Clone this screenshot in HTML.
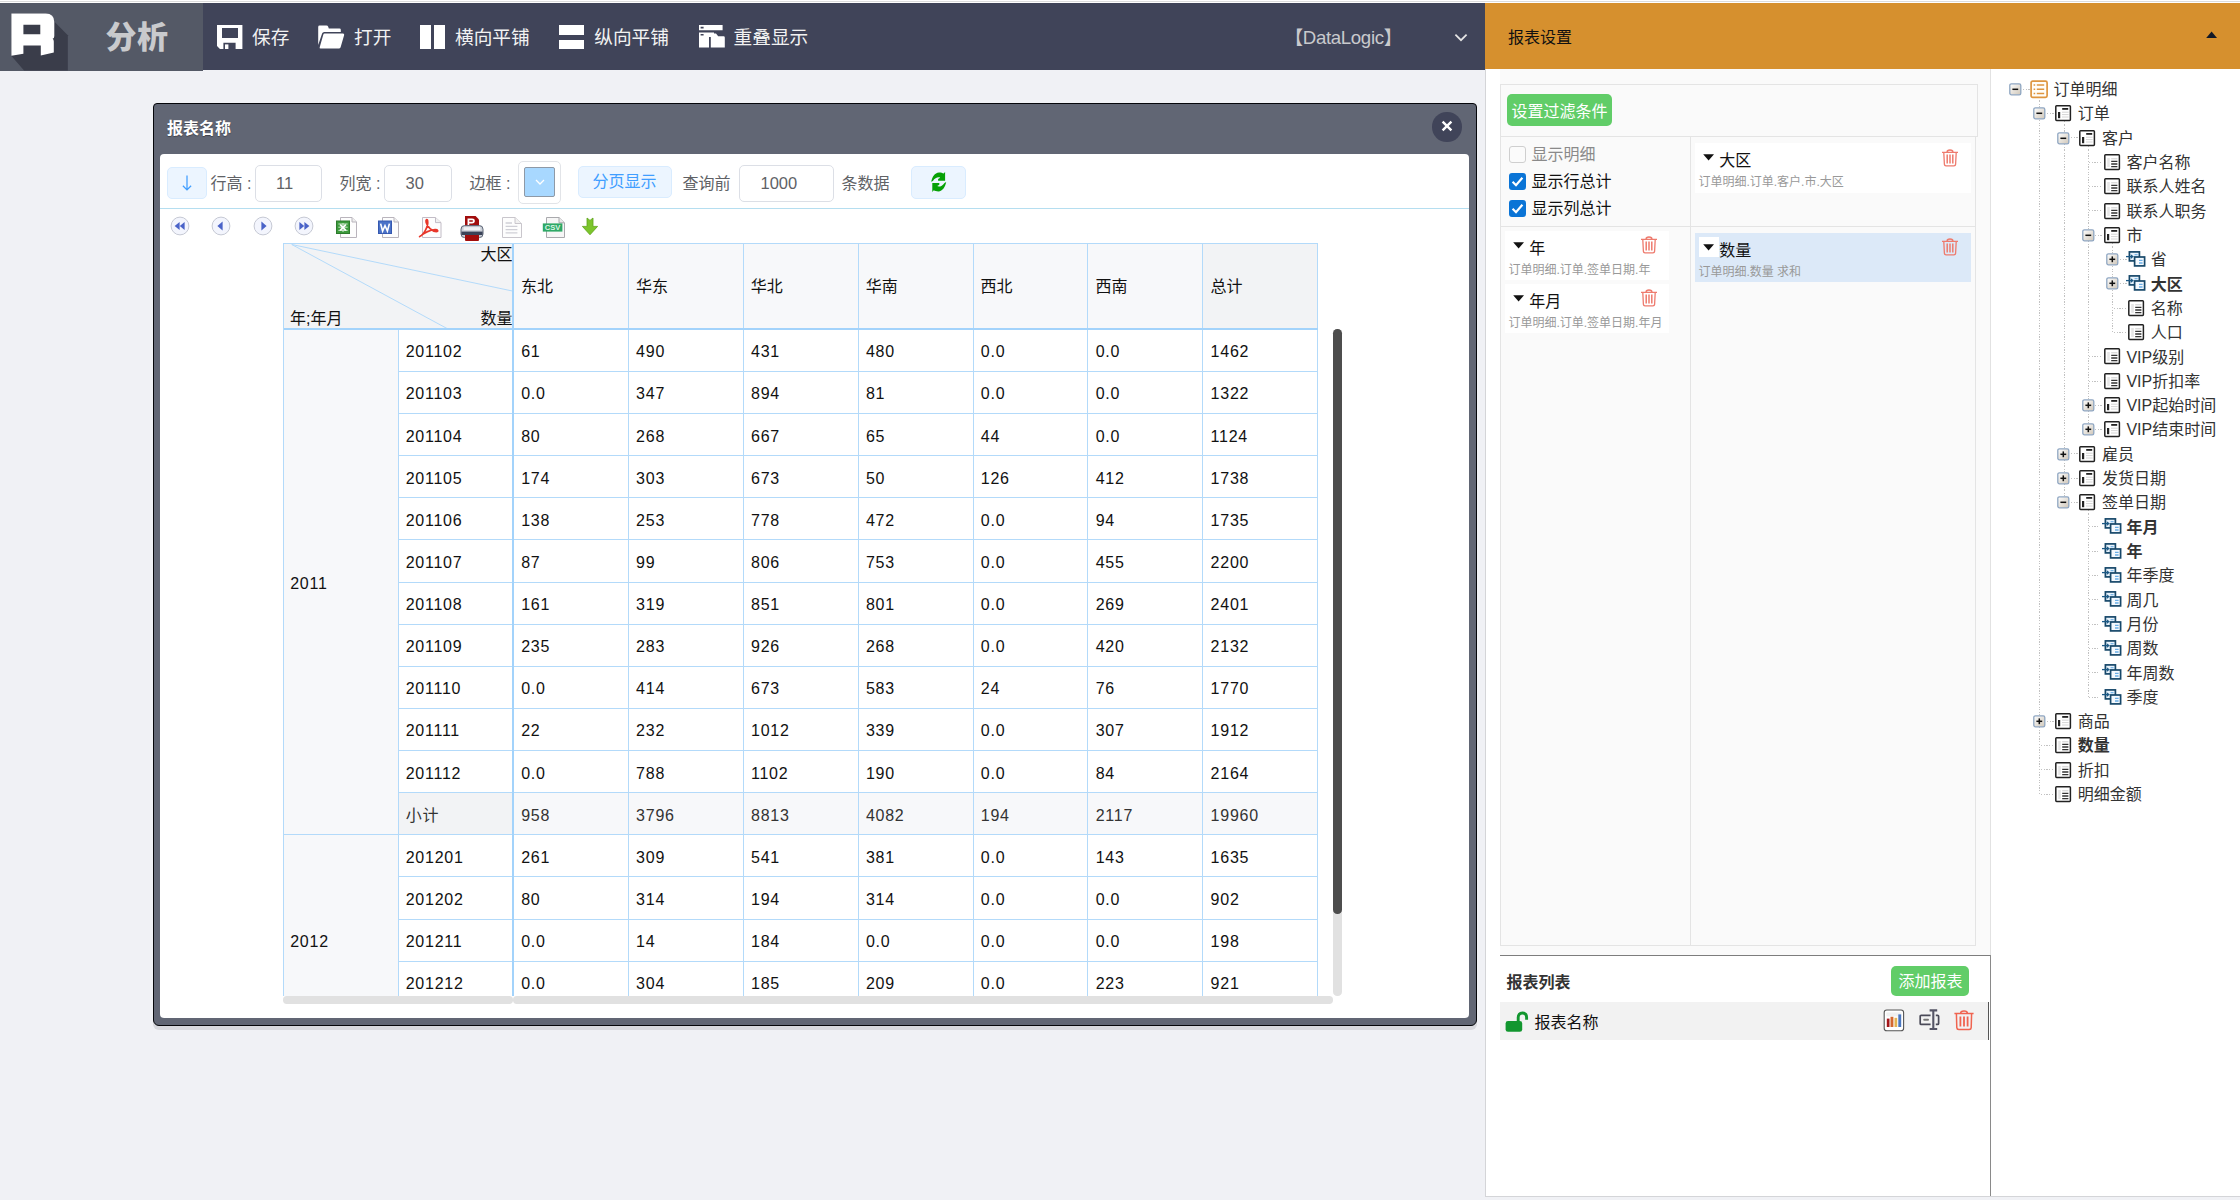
<!DOCTYPE html>
<html lang="zh-CN"><head><meta charset="utf-8"><title>分析</title>
<style>
*{box-sizing:border-box}
html,body{margin:0;padding:0}
body{width:2240px;height:1200px;overflow:hidden;background:#f0f1f5;position:relative;font-family:"Liberation Sans","Noto Sans CJK SC",sans-serif;color:#000}
div,svg{position:absolute}
.t{white-space:nowrap}
.f19{font-size:18.67px}
.f16{font-size:16px}
.f12{font-size:12px}
.num{font-size:16px;letter-spacing:.75px;color:#111}
</style></head>
<body>
<div style="left:0.00px;top:0.00px;width:2240.00px;height:3.00px;background:#fff"></div>
<div style="left:0.00px;top:1.00px;width:2240.00px;height:1.00px;background:#dcdcdc"></div>
<div style="left:0.00px;top:3.00px;width:1485.00px;height:66.50px;background:#404459"></div>
<div style="left:0.00px;top:3.00px;width:203.00px;height:67.50px;background:#545966"></div>
<svg style="left:0;top:3px" width="203" height="68" viewBox="0 3 203 68">
<polygon points="11.4,13.4 46,13.4 54.2,21.4 67.8,35.2 67.8,70.5 24.1,70.5 11.2,55.8" fill="#3a3d4a"/>
<path fill="#fff" fill-rule="evenodd" d="M11.4,13.4 H45.6 Q54.3,13.4 54.3,22 V36 Q54.3,38.4 52.6,38.8 Q53.8,39.4 53.8,41.4 V52.6 L40.8,55.4 V45.5 H23.4 V53.8 L11.4,55.8 Z M23.4,24.8 H40.3 V34.2 H23.4 Z"/>
</svg>
<div class="t" style="left:105.40px;top:20.80px;height:34.00px;line-height:34.00px;font-size:31px;font-weight:900;color:#c9cacd;letter-spacing:0.5px">分析</div>
<svg style="left:216.5px;top:25px" width="26" height="24" viewBox="0 0 26 24"><path fill="#fff" fill-rule="evenodd" d="M0,0 H25.4 V24 H18.6 V17.8 H6.4 V24 H3 L0,21 Z M5,2.9 H21 V12.9 H5 Z"/><rect x="8" y="19.4" width="3.4" height="4.6" fill="#fff"/></svg>
<div class="t f19" style="left:252.00px;top:23.30px;height:30.00px;line-height:30.00px;color:#f2f2f2">保存</div>
<svg style="left:317px;top:25px" width="28" height="24" viewBox="0 0 28 24"><path fill="#fff" d="M1.2,2 Q1.2,0.6 2.6,0.6 H9.5 Q10.8,0.6 11.2,1.8 L11.8,3.4 H22.5 Q23.8,3.4 23.8,4.8 V7 H7.2 Q5.6,7 5.1,8.6 L1.2,20 Z"/><path fill="#fff" d="M7.6,8.6 H26 Q27.6,8.6 27.1,10.2 L23.6,22.2 Q23.2,23.6 21.8,23.6 H3.6 Q2.2,23.6 2.7,22.2 L6.2,10 Q6.6,8.6 7.6,8.6 Z"/></svg>
<div class="t f19" style="left:354.00px;top:23.30px;height:30.00px;line-height:30.00px;color:#f2f2f2">打开</div>
<div style="left:420.00px;top:25.00px;width:10.70px;height:24.00px;background:#fff"></div>
<div style="left:434.30px;top:25.00px;width:10.70px;height:24.00px;background:#fff"></div>
<div class="t f19" style="left:455.00px;top:23.30px;height:30.00px;line-height:30.00px;color:#f2f2f2">横向平铺</div>
<div style="left:559.00px;top:25.00px;width:25.00px;height:10.00px;background:#fff"></div>
<div style="left:559.00px;top:39.60px;width:25.00px;height:9.40px;background:#fff"></div>
<div class="t f19" style="left:594.30px;top:23.30px;height:30.00px;line-height:30.00px;color:#f2f2f2">纵向平铺</div>
<svg style="left:699px;top:25px" width="27" height="23" viewBox="0 0 27 23"><path fill="#fff" fill-rule="evenodd" d="M0,0 H23.6 V5.2 H0 Z M1.6,1.8 H4.6 V3.4 H1.6 Z"/><path fill="#fff" fill-rule="evenodd" d="M0,7.4 H15 V12 H10 V22.4 H0 Z M1.6,9 H4.6 V10.6 H1.6 Z"/><path fill="#fff" d="M11.8,13.4 V9.6 Q11.8,8.6 12.8,8.6 H17 L19.2,11.2 H24.6 Q25.8,11.2 25.8,12.4 V22.4 H11.8 Z"/></svg>
<div class="t f19" style="left:733.60px;top:23.30px;height:30.00px;line-height:30.00px;color:#f2f2f2">重叠显示</div>
<div class="t f19" style="left:1284.50px;top:22.50px;height:30.00px;line-height:30.00px;color:#c9cacd;letter-spacing:-0.35px">【DataLogic】</div>
<svg style="left:1453px;top:32px" width="16" height="12" viewBox="0 0 16 12"><polyline points="2.4,2.6 8,8.2 13.6,2.6" fill="none" stroke="#e6e6e6" stroke-width="1.7"/></svg>
<div style="left:1485.00px;top:3.00px;width:755.00px;height:66.00px;background:#d6902e"></div>
<div class="t f16" style="left:1508.00px;top:23.00px;height:30.00px;line-height:30.00px;color:#111">报表设置</div>
<svg style="left:2205px;top:30px" width="14" height="10" viewBox="0 0 14 10"><polygon points="1.2,8 6.6,1.4 12,8" fill="#111827"/></svg>
<div style="left:153.00px;top:103.00px;width:1324.20px;height:922.80px;background:#616674;border:1.3px solid #05060a;border-radius:4px 4px 6px 6px;box-shadow:0 4px 0 #d8d9de"></div>
<div style="left:160.00px;top:153.75px;width:1309.20px;height:864.20px;background:#fff;border-radius:4px"></div>
<div class="t f16" style="left:167.00px;top:114.20px;height:30.00px;line-height:30.00px;color:#fff;font-weight:700;text-shadow:0 1px 1px rgba(0,0,0,.35)">报表名称</div>
<div style="left:1432.30px;top:112.30px;width:29.40px;height:29.40px;background:#404459;border-radius:50%"></div>
<svg style="left:1440.2px;top:118.8px" width="14" height="14" viewBox="0 0 14 14"><path d="M2.6,2.6 L11.4,11.4 M11.4,2.6 L2.6,11.4" stroke="#fff" stroke-width="2.4" fill="none"/></svg>
<div style="left:160.00px;top:208.00px;width:1309.00px;height:1.30px;background:#b5def0"></div>
<div style="left:167.00px;top:167.00px;width:40.00px;height:32.00px;background:#ecf5ff;border:1px solid #d9ecff;border-radius:5px"></div>
<svg style="left:179px;top:173px" width="16" height="20" viewBox="0 0 16 20"><path d="M8,2.4 V17 M3.9,12.8 L8,16.9 L12.1,12.8" stroke="#409eff" stroke-width="1.25" fill="none"/></svg>
<div class="t f16" style="left:210.50px;top:168.00px;height:32.00px;line-height:32.00px;color:#606266">行高 :</div>
<div style="left:255.00px;top:165.00px;width:67.00px;height:37.00px;background:#fff;border:1px solid #dcdfe6;border-radius:5px"></div>
<div class="t" style="left:276.00px;top:166.60px;height:32.00px;line-height:32.00px;color:#606266;font-size:16.5px">11</div>
<div class="t f16" style="left:339.50px;top:168.00px;height:32.00px;line-height:32.00px;color:#606266">列宽 :</div>
<div style="left:384.00px;top:165.00px;width:67.50px;height:37.00px;background:#fff;border:1px solid #dcdfe6;border-radius:5px"></div>
<div class="t" style="left:405.50px;top:166.60px;height:32.00px;line-height:32.00px;color:#606266;font-size:16.5px">30</div>
<div class="t f16" style="left:469.50px;top:168.00px;height:32.00px;line-height:32.00px;color:#606266">边框 :</div>
<div style="left:518.00px;top:161.00px;width:43.00px;height:43.00px;background:#fff;border:1px solid #e2e4e8;border-radius:5px"></div>
<div style="left:523.60px;top:167.00px;width:31.60px;height:30.00px;background:#a8d8ff;border:1px solid #8e99a6;border-radius:2px"></div>
<svg style="left:533px;top:177px" width="14" height="10" viewBox="0 0 14 10"><polyline points="3,3 7,7 11,3" fill="none" stroke="#fff" stroke-width="1.3"/></svg>
<div style="left:578.00px;top:166.00px;width:94.00px;height:31.60px;background:#ecf5ff;border:1px solid #d9ecff;border-radius:5px"></div>
<div class="t f16" style="left:592.50px;top:165.80px;height:31.00px;line-height:31.00px;color:#409eff">分页显示</div>
<div class="t f16" style="left:682.50px;top:168.00px;height:32.00px;line-height:32.00px;color:#606266">查询前</div>
<div style="left:739.00px;top:165.00px;width:95.00px;height:37.00px;background:#fff;border:1px solid #dcdfe6;border-radius:5px"></div>
<div class="t" style="left:760.50px;top:166.60px;height:32.00px;line-height:32.00px;color:#606266;font-size:16.5px">1000</div>
<div class="t f16" style="left:841.50px;top:168.00px;height:32.00px;line-height:32.00px;color:#606266">条数据</div>
<div style="left:911.00px;top:166.00px;width:55.00px;height:33.00px;background:#ecf5ff;border:1px solid #d9ecff;border-radius:5px"></div>
<svg style="left:930.7px;top:172px" width="16" height="20" viewBox="0 0 16 20">
<path id="rf" d="M0.2,9.8 C1.2,5 3.6,0.6 8,0.4 C10,0.4 11.6,0.9 12.6,1.6 L14.1,0 V8.8 H7.1 V7.1 L9.2,5.8 C7.6,4.6 4,5.6 1.9,9 Z" fill="#06a106"/>
<path d="M0.2,9.8 C1.2,5 3.6,0.6 8,0.4 C10,0.4 11.6,0.9 12.6,1.6 L14.1,0 V8.8 H7.1 V7.1 L9.2,5.8 C7.6,4.6 4,5.6 1.9,9 Z" fill="#06a106" transform="rotate(180 7.7 9.95)"/>
</svg>
<svg style="left:170.4px;top:215.5px" width="20" height="20" viewBox="0 0 20 20"><circle cx="10" cy="10" r="8.9" fill="#f3f5fd" stroke="#c6c9d4" stroke-width="1"/><polygon points="9.6,6 9.6,14 4.6,10" fill="#4a63c8"/><polygon points="14.6,6 14.6,14 9.8,10" fill="#4a63c8"/></svg>
<svg style="left:211.4px;top:215.5px" width="20" height="20" viewBox="0 0 20 20"><circle cx="10" cy="10" r="8.9" fill="#f3f5fd" stroke="#c6c9d4" stroke-width="1"/><polygon points="11.6,5.6 11.6,14.4 6.4,10" fill="#4a63c8"/></svg>
<svg style="left:253.4px;top:215.5px" width="20" height="20" viewBox="0 0 20 20"><circle cx="10" cy="10" r="8.9" fill="#f3f5fd" stroke="#c6c9d4" stroke-width="1"/><polygon points="8.4,5.6 8.4,14.4 13.6,10" fill="#4a63c8"/></svg>
<svg style="left:294.2px;top:215.5px" width="20" height="20" viewBox="0 0 20 20"><circle cx="10" cy="10" r="8.9" fill="#f3f5fd" stroke="#c6c9d4" stroke-width="1"/><polygon points="5.4,6 5.4,14 10.2,10" fill="#4a63c8"/><polygon points="10.4,6 10.4,14 15.4,10" fill="#4a63c8"/></svg>
<svg style="left:334.5px;top:215.5px" width="24" height="23" viewBox="0 0 24 23"><path d="M5.5,1.5 H17 L21.5,6 V21.5 H5.5 Z" fill="#fdfdfd" stroke="#b9b4bc" stroke-width="1"/><path d="M17,1.5 V6 H21.5" fill="#eee" stroke="#b9b4bc" stroke-width="1"/><rect x="1.5" y="5" width="13" height="12.5" fill="#3c9a3c" stroke="#2d7a2d" stroke-width="1"/><path d="M3.4,8 H12.6 M3.4,11.2 H12.6 M3.4,14.4 H12.6 M8,7 V16" stroke="#cfe8cf" stroke-width="1"/><path d="M5.2,8.6 L10.8,14.4 M10.8,8.6 L5.2,14.4" stroke="#fff" stroke-width="1.6"/></svg>
<svg style="left:376.5px;top:215.5px" width="24" height="23" viewBox="0 0 24 23"><path d="M5.5,1.5 H17 L21.5,6 V21.5 H5.5 Z" fill="#fdfdfd" stroke="#b9b4bc" stroke-width="1"/><path d="M17,1.5 V6 H21.5" fill="#eee" stroke="#b9b4bc" stroke-width="1"/><rect x="1.5" y="5" width="13" height="12.5" fill="#4a72c8" stroke="#3558b0" stroke-width="1"/><path d="M3.6,7.6 L5.6,15 L8,9.6 L10.4,15 L12.4,7.6" stroke="#fff" stroke-width="1.6" fill="none"/></svg>
<svg style="left:417.5px;top:215.5px" width="25" height="23" viewBox="0 0 25 23"><path d="M4.5,1.5 H17.5 L23,6.6 V21.5 H4.5 Z" fill="#fdfdfd" stroke="#c2bcc6" stroke-width="1"/><path d="M17.5,1.5 V6.6 H23" fill="#f0f0f0" stroke="#c2bcc6" stroke-width="1"/><path d="M1.6,20.6 C6,18.6 10.6,10 9.6,4.6 C9.2,2.6 7.4,3.6 8.2,6.4 C9.6,11 13.6,15.4 18.4,15.6 C20.6,15.6 20,13.4 17,13.6 C11.4,14 5.6,17.4 1.6,20.6 Z" fill="none" stroke="#e8362a" stroke-width="1.7" stroke-linejoin="round"/></svg>
<svg style="left:460px;top:215px" width="24" height="27" viewBox="0 0 24 27">
<path d="M5,1 H15.6 L19,4.4 V13 H5 Z" fill="#a10d0d"/>
<path d="M8.4,3.6 V10.4 M8.4,4.4 H12 Q14,4.4 14,6 Q14,7.6 12,7.6 H8.4" stroke="#fff" stroke-width="1.7" fill="none"/>
<rect x="1" y="10.6" width="22" height="12" rx="3.6" fill="#c9ced6" stroke="#5d6575" stroke-width="1"/>
<rect x="3.6" y="12.2" width="16.8" height="3" fill="#eef0f3"/>
<rect x="1.4" y="16.6" width="21.2" height="3.4" fill="#3a4358"/>
<path d="M5,20 H19 V25 Q19,26 18,26 H6 Q5,26 5,25 Z" fill="#a10d0d"/>
</svg>
<svg style="left:500.5px;top:215.5px" width="22" height="23" viewBox="0 0 22 23"><path d="M1.5,1.5 H14 L20.5,7.5 V21.5 H1.5 Z" fill="#fdfdfd" stroke="#c9c6cc" stroke-width="1"/><path d="M14,1.5 V7.5 H20.5" fill="#f1f1f1" stroke="#c9c6cc" stroke-width="1"/><path d="M4.6,7 H11 M4.6,10.4 H16.4 M4.6,13.6 H16.4 M4.6,16.8 H16.4" stroke="#cfcfd6" stroke-width="1.3"/></svg>
<svg style="left:542px;top:215.5px" width="25" height="23" viewBox="0 0 25 23"><path d="M4.5,1.5 H17 L22.5,6.8 V21.5 H4.5 Z" fill="#f6f6f6" stroke="#a9a9ad" stroke-width="1"/><path d="M17,1.5 V6.8 H22.5" fill="#e9e9e9" stroke="#a9a9ad" stroke-width="1"/><rect x="0.8" y="7.4" width="19.6" height="8.2" fill="#2fa866"/><text x="10.6" y="14.4" font-family="Liberation Sans,sans-serif" font-size="7.6" font-weight="700" fill="#d9f5e4" text-anchor="middle">CSV</text></svg>
<svg style="left:581px;top:217px" width="18" height="19" viewBox="0 0 18 19"><path d="M6,1 L9,3.4 L12,1 V9.4 H16.6 L9,17.8 L1.4,9.4 H6 Z" fill="#7cc52c" stroke="#5ea31a" stroke-width="0.8"/></svg>
<div style="left:282.6px;top:242.0px;width:1036.10px;height:753.75px;overflow:hidden"><div style="left:1px;top:1px;width:1034.10px;height:10px"><div style="left:0.00px;top:0.00px;width:1034.10px;height:86.30px;background:#f7f8fa"></div><div style="left:0.00px;top:0.00px;width:229.80px;height:86.30px;background:#f2f3f5"></div><div style="left:918.40px;top:0.00px;width:115.00px;height:86.30px;background:#f2f3f5"></div><div style="left:0.00px;top:86.30px;width:114.90px;height:716.21px;background:#f7f8fa"></div><div class="t num" style="left:122.10px;top:88.30px;height:42.13px;line-height:42.13px;">201102</div><div class="t num" style="left:237.60px;top:88.30px;height:42.13px;line-height:42.13px;">61</div><div class="t num" style="left:352.50px;top:88.30px;height:42.13px;line-height:42.13px;">490</div><div class="t num" style="left:467.40px;top:88.30px;height:42.13px;line-height:42.13px;">431</div><div class="t num" style="left:582.30px;top:88.30px;height:42.13px;line-height:42.13px;">480</div><div class="t num" style="left:697.20px;top:88.30px;height:42.13px;line-height:42.13px;">0.0</div><div class="t num" style="left:812.10px;top:88.30px;height:42.13px;line-height:42.13px;">0.0</div><div class="t num" style="left:927.00px;top:88.30px;height:42.13px;line-height:42.13px;">1462</div><div style="left:114.90px;top:128.00px;width:919.20px;height:1.00px;background:#b3dafa"></div><div class="t num" style="left:122.10px;top:130.43px;height:42.13px;line-height:42.13px;">201103</div><div class="t num" style="left:237.60px;top:130.43px;height:42.13px;line-height:42.13px;">0.0</div><div class="t num" style="left:352.50px;top:130.43px;height:42.13px;line-height:42.13px;">347</div><div class="t num" style="left:467.40px;top:130.43px;height:42.13px;line-height:42.13px;">894</div><div class="t num" style="left:582.30px;top:130.43px;height:42.13px;line-height:42.13px;">81</div><div class="t num" style="left:697.20px;top:130.43px;height:42.13px;line-height:42.13px;">0.0</div><div class="t num" style="left:812.10px;top:130.43px;height:42.13px;line-height:42.13px;">0.0</div><div class="t num" style="left:927.00px;top:130.43px;height:42.13px;line-height:42.13px;">1322</div><div style="left:114.90px;top:170.00px;width:919.20px;height:1.00px;background:#b3dafa"></div><div class="t num" style="left:122.10px;top:172.56px;height:42.13px;line-height:42.13px;">201104</div><div class="t num" style="left:237.60px;top:172.56px;height:42.13px;line-height:42.13px;">80</div><div class="t num" style="left:352.50px;top:172.56px;height:42.13px;line-height:42.13px;">268</div><div class="t num" style="left:467.40px;top:172.56px;height:42.13px;line-height:42.13px;">667</div><div class="t num" style="left:582.30px;top:172.56px;height:42.13px;line-height:42.13px;">65</div><div class="t num" style="left:697.20px;top:172.56px;height:42.13px;line-height:42.13px;">44</div><div class="t num" style="left:812.10px;top:172.56px;height:42.13px;line-height:42.13px;">0.0</div><div class="t num" style="left:927.00px;top:172.56px;height:42.13px;line-height:42.13px;">1124</div><div style="left:114.90px;top:212.00px;width:919.20px;height:1.00px;background:#b3dafa"></div><div class="t num" style="left:122.10px;top:214.69px;height:42.13px;line-height:42.13px;">201105</div><div class="t num" style="left:237.60px;top:214.69px;height:42.13px;line-height:42.13px;">174</div><div class="t num" style="left:352.50px;top:214.69px;height:42.13px;line-height:42.13px;">303</div><div class="t num" style="left:467.40px;top:214.69px;height:42.13px;line-height:42.13px;">673</div><div class="t num" style="left:582.30px;top:214.69px;height:42.13px;line-height:42.13px;">50</div><div class="t num" style="left:697.20px;top:214.69px;height:42.13px;line-height:42.13px;">126</div><div class="t num" style="left:812.10px;top:214.69px;height:42.13px;line-height:42.13px;">412</div><div class="t num" style="left:927.00px;top:214.69px;height:42.13px;line-height:42.13px;">1738</div><div style="left:114.90px;top:254.00px;width:919.20px;height:1.00px;background:#b3dafa"></div><div class="t num" style="left:122.10px;top:256.82px;height:42.13px;line-height:42.13px;">201106</div><div class="t num" style="left:237.60px;top:256.82px;height:42.13px;line-height:42.13px;">138</div><div class="t num" style="left:352.50px;top:256.82px;height:42.13px;line-height:42.13px;">253</div><div class="t num" style="left:467.40px;top:256.82px;height:42.13px;line-height:42.13px;">778</div><div class="t num" style="left:582.30px;top:256.82px;height:42.13px;line-height:42.13px;">472</div><div class="t num" style="left:697.20px;top:256.82px;height:42.13px;line-height:42.13px;">0.0</div><div class="t num" style="left:812.10px;top:256.82px;height:42.13px;line-height:42.13px;">94</div><div class="t num" style="left:927.00px;top:256.82px;height:42.13px;line-height:42.13px;">1735</div><div style="left:114.90px;top:296.00px;width:919.20px;height:1.00px;background:#b3dafa"></div><div class="t num" style="left:122.10px;top:298.95px;height:42.13px;line-height:42.13px;">201107</div><div class="t num" style="left:237.60px;top:298.95px;height:42.13px;line-height:42.13px;">87</div><div class="t num" style="left:352.50px;top:298.95px;height:42.13px;line-height:42.13px;">99</div><div class="t num" style="left:467.40px;top:298.95px;height:42.13px;line-height:42.13px;">806</div><div class="t num" style="left:582.30px;top:298.95px;height:42.13px;line-height:42.13px;">753</div><div class="t num" style="left:697.20px;top:298.95px;height:42.13px;line-height:42.13px;">0.0</div><div class="t num" style="left:812.10px;top:298.95px;height:42.13px;line-height:42.13px;">455</div><div class="t num" style="left:927.00px;top:298.95px;height:42.13px;line-height:42.13px;">2200</div><div style="left:114.90px;top:339.00px;width:919.20px;height:1.00px;background:#b3dafa"></div><div class="t num" style="left:122.10px;top:341.08px;height:42.13px;line-height:42.13px;">201108</div><div class="t num" style="left:237.60px;top:341.08px;height:42.13px;line-height:42.13px;">161</div><div class="t num" style="left:352.50px;top:341.08px;height:42.13px;line-height:42.13px;">319</div><div class="t num" style="left:467.40px;top:341.08px;height:42.13px;line-height:42.13px;">851</div><div class="t num" style="left:582.30px;top:341.08px;height:42.13px;line-height:42.13px;">801</div><div class="t num" style="left:697.20px;top:341.08px;height:42.13px;line-height:42.13px;">0.0</div><div class="t num" style="left:812.10px;top:341.08px;height:42.13px;line-height:42.13px;">269</div><div class="t num" style="left:927.00px;top:341.08px;height:42.13px;line-height:42.13px;">2401</div><div style="left:114.90px;top:381.00px;width:919.20px;height:1.00px;background:#b3dafa"></div><div class="t num" style="left:122.10px;top:383.21px;height:42.13px;line-height:42.13px;">201109</div><div class="t num" style="left:237.60px;top:383.21px;height:42.13px;line-height:42.13px;">235</div><div class="t num" style="left:352.50px;top:383.21px;height:42.13px;line-height:42.13px;">283</div><div class="t num" style="left:467.40px;top:383.21px;height:42.13px;line-height:42.13px;">926</div><div class="t num" style="left:582.30px;top:383.21px;height:42.13px;line-height:42.13px;">268</div><div class="t num" style="left:697.20px;top:383.21px;height:42.13px;line-height:42.13px;">0.0</div><div class="t num" style="left:812.10px;top:383.21px;height:42.13px;line-height:42.13px;">420</div><div class="t num" style="left:927.00px;top:383.21px;height:42.13px;line-height:42.13px;">2132</div><div style="left:114.90px;top:423.00px;width:919.20px;height:1.00px;background:#b3dafa"></div><div class="t num" style="left:122.10px;top:425.34px;height:42.13px;line-height:42.13px;">201110</div><div class="t num" style="left:237.60px;top:425.34px;height:42.13px;line-height:42.13px;">0.0</div><div class="t num" style="left:352.50px;top:425.34px;height:42.13px;line-height:42.13px;">414</div><div class="t num" style="left:467.40px;top:425.34px;height:42.13px;line-height:42.13px;">673</div><div class="t num" style="left:582.30px;top:425.34px;height:42.13px;line-height:42.13px;">583</div><div class="t num" style="left:697.20px;top:425.34px;height:42.13px;line-height:42.13px;">24</div><div class="t num" style="left:812.10px;top:425.34px;height:42.13px;line-height:42.13px;">76</div><div class="t num" style="left:927.00px;top:425.34px;height:42.13px;line-height:42.13px;">1770</div><div style="left:114.90px;top:465.00px;width:919.20px;height:1.00px;background:#b3dafa"></div><div class="t num" style="left:122.10px;top:467.47px;height:42.13px;line-height:42.13px;">201111</div><div class="t num" style="left:237.60px;top:467.47px;height:42.13px;line-height:42.13px;">22</div><div class="t num" style="left:352.50px;top:467.47px;height:42.13px;line-height:42.13px;">232</div><div class="t num" style="left:467.40px;top:467.47px;height:42.13px;line-height:42.13px;">1012</div><div class="t num" style="left:582.30px;top:467.47px;height:42.13px;line-height:42.13px;">339</div><div class="t num" style="left:697.20px;top:467.47px;height:42.13px;line-height:42.13px;">0.0</div><div class="t num" style="left:812.10px;top:467.47px;height:42.13px;line-height:42.13px;">307</div><div class="t num" style="left:927.00px;top:467.47px;height:42.13px;line-height:42.13px;">1912</div><div style="left:114.90px;top:507.00px;width:919.20px;height:1.00px;background:#b3dafa"></div><div class="t num" style="left:122.10px;top:509.60px;height:42.13px;line-height:42.13px;">201112</div><div class="t num" style="left:237.60px;top:509.60px;height:42.13px;line-height:42.13px;">0.0</div><div class="t num" style="left:352.50px;top:509.60px;height:42.13px;line-height:42.13px;">788</div><div class="t num" style="left:467.40px;top:509.60px;height:42.13px;line-height:42.13px;">1102</div><div class="t num" style="left:582.30px;top:509.60px;height:42.13px;line-height:42.13px;">190</div><div class="t num" style="left:697.20px;top:509.60px;height:42.13px;line-height:42.13px;">0.0</div><div class="t num" style="left:812.10px;top:509.60px;height:42.13px;line-height:42.13px;">84</div><div class="t num" style="left:927.00px;top:509.60px;height:42.13px;line-height:42.13px;">2164</div><div style="left:114.90px;top:549.00px;width:919.20px;height:1.00px;background:#b3dafa"></div><div style="left:114.90px;top:549.73px;width:114.90px;height:42.13px;background:#f2f3f5"></div><div style="left:229.80px;top:549.73px;width:804.30px;height:42.13px;background:#f7f8fa"></div><div class="t num" style="left:122.10px;top:551.73px;height:42.13px;line-height:42.13px;color:#333">小计</div><div class="t num" style="left:237.60px;top:551.73px;height:42.13px;line-height:42.13px;color:#333">958</div><div class="t num" style="left:352.50px;top:551.73px;height:42.13px;line-height:42.13px;color:#333">3796</div><div class="t num" style="left:467.40px;top:551.73px;height:42.13px;line-height:42.13px;color:#333">8813</div><div class="t num" style="left:582.30px;top:551.73px;height:42.13px;line-height:42.13px;color:#333">4082</div><div class="t num" style="left:697.20px;top:551.73px;height:42.13px;line-height:42.13px;color:#333">194</div><div class="t num" style="left:812.10px;top:551.73px;height:42.13px;line-height:42.13px;color:#333">2117</div><div class="t num" style="left:927.00px;top:551.73px;height:42.13px;line-height:42.13px;color:#333">19960</div><div style="left:114.90px;top:591.00px;width:919.20px;height:1.00px;background:#b3dafa"></div><div class="t num" style="left:122.10px;top:593.86px;height:42.13px;line-height:42.13px;">201201</div><div class="t num" style="left:237.60px;top:593.86px;height:42.13px;line-height:42.13px;">261</div><div class="t num" style="left:352.50px;top:593.86px;height:42.13px;line-height:42.13px;">309</div><div class="t num" style="left:467.40px;top:593.86px;height:42.13px;line-height:42.13px;">541</div><div class="t num" style="left:582.30px;top:593.86px;height:42.13px;line-height:42.13px;">381</div><div class="t num" style="left:697.20px;top:593.86px;height:42.13px;line-height:42.13px;">0.0</div><div class="t num" style="left:812.10px;top:593.86px;height:42.13px;line-height:42.13px;">143</div><div class="t num" style="left:927.00px;top:593.86px;height:42.13px;line-height:42.13px;">1635</div><div style="left:114.90px;top:633.00px;width:919.20px;height:1.00px;background:#b3dafa"></div><div class="t num" style="left:122.10px;top:635.99px;height:42.13px;line-height:42.13px;">201202</div><div class="t num" style="left:237.60px;top:635.99px;height:42.13px;line-height:42.13px;">80</div><div class="t num" style="left:352.50px;top:635.99px;height:42.13px;line-height:42.13px;">314</div><div class="t num" style="left:467.40px;top:635.99px;height:42.13px;line-height:42.13px;">194</div><div class="t num" style="left:582.30px;top:635.99px;height:42.13px;line-height:42.13px;">314</div><div class="t num" style="left:697.20px;top:635.99px;height:42.13px;line-height:42.13px;">0.0</div><div class="t num" style="left:812.10px;top:635.99px;height:42.13px;line-height:42.13px;">0.0</div><div class="t num" style="left:927.00px;top:635.99px;height:42.13px;line-height:42.13px;">902</div><div style="left:114.90px;top:676.00px;width:919.20px;height:1.00px;background:#b3dafa"></div><div class="t num" style="left:122.10px;top:678.12px;height:42.13px;line-height:42.13px;">201211</div><div class="t num" style="left:237.60px;top:678.12px;height:42.13px;line-height:42.13px;">0.0</div><div class="t num" style="left:352.50px;top:678.12px;height:42.13px;line-height:42.13px;">14</div><div class="t num" style="left:467.40px;top:678.12px;height:42.13px;line-height:42.13px;">184</div><div class="t num" style="left:582.30px;top:678.12px;height:42.13px;line-height:42.13px;">0.0</div><div class="t num" style="left:697.20px;top:678.12px;height:42.13px;line-height:42.13px;">0.0</div><div class="t num" style="left:812.10px;top:678.12px;height:42.13px;line-height:42.13px;">0.0</div><div class="t num" style="left:927.00px;top:678.12px;height:42.13px;line-height:42.13px;">198</div><div style="left:114.90px;top:718.00px;width:919.20px;height:1.00px;background:#b3dafa"></div><div class="t num" style="left:122.10px;top:720.25px;height:42.13px;line-height:42.13px;">201212</div><div class="t num" style="left:237.60px;top:720.25px;height:42.13px;line-height:42.13px;">0.0</div><div class="t num" style="left:352.50px;top:720.25px;height:42.13px;line-height:42.13px;">304</div><div class="t num" style="left:467.40px;top:720.25px;height:42.13px;line-height:42.13px;">185</div><div class="t num" style="left:582.30px;top:720.25px;height:42.13px;line-height:42.13px;">209</div><div class="t num" style="left:697.20px;top:720.25px;height:42.13px;line-height:42.13px;">0.0</div><div class="t num" style="left:812.10px;top:720.25px;height:42.13px;line-height:42.13px;">223</div><div class="t num" style="left:927.00px;top:720.25px;height:42.13px;line-height:42.13px;">921</div><div style="left:114.90px;top:760.00px;width:919.20px;height:1.00px;background:#b3dafa"></div><div class="t num" style="left:6.60px;top:88.30px;height:505.56px;line-height:505.56px;">2011</div><div class="t num" style="left:6.60px;top:593.86px;height:210.65px;line-height:210.65px;">2012</div><div style="left:0.00px;top:591.00px;width:114.90px;height:1.00px;background:#b3dafa"></div><div class="t f16" style="left:237.40px;top:1.00px;height:86.30px;line-height:86.30px;color:#111">东北</div><div class="t f16" style="left:352.30px;top:1.00px;height:86.30px;line-height:86.30px;color:#111">华东</div><div class="t f16" style="left:467.20px;top:1.00px;height:86.30px;line-height:86.30px;color:#111">华北</div><div class="t f16" style="left:582.10px;top:1.00px;height:86.30px;line-height:86.30px;color:#111">华南</div><div class="t f16" style="left:697.00px;top:1.00px;height:86.30px;line-height:86.30px;color:#111">西北</div><div class="t f16" style="left:811.90px;top:1.00px;height:86.30px;line-height:86.30px;color:#111">西南</div><div class="t f16" style="left:926.80px;top:1.00px;height:86.30px;line-height:86.30px;color:#111">总计</div><div class="t f16" style="left:0.00px;top:-1.50px;height:26.00px;line-height:26.00px;width:228.80px;text-align:right;color:#111">大区</div><div class="t f16" style="left:0.00px;top:63.20px;height:26.00px;line-height:26.00px;width:228.80px;text-align:right;color:#111">数量</div><div class="t f16" style="left:6.50px;top:63.20px;height:26.00px;line-height:26.00px;color:#111">年;年月</div><svg style="left:0;top:0" width="229.8" height="86.3" viewBox="0 0 229.8 86.3"><path d="M7.75,1.5 L229.8,48.3 M7.75,1.5 L164.5,86.3" stroke="#b3dafa" stroke-width="1" fill="none"/></svg><div style="left:-0.60px;top:0.00px;width:1.00px;height:2000.00px;background:#b3dafa"></div><div style="left:114.40px;top:86.30px;width:1.00px;height:2000.00px;background:#b3dafa"></div><div style="left:228.10px;top:0.00px;width:2.40px;height:2000.00px;background:#a3d3fb"></div><div style="left:344.40px;top:0.00px;width:1.00px;height:2000.00px;background:#b3dafa"></div><div style="left:459.40px;top:0.00px;width:1.00px;height:2000.00px;background:#b3dafa"></div><div style="left:574.40px;top:0.00px;width:1.00px;height:2000.00px;background:#b3dafa"></div><div style="left:689.40px;top:0.00px;width:1.00px;height:2000.00px;background:#b3dafa"></div><div style="left:803.40px;top:0.00px;width:1.00px;height:2000.00px;background:#b3dafa"></div><div style="left:918.40px;top:0.00px;width:1.00px;height:2000.00px;background:#b3dafa"></div><div style="left:1033.40px;top:0.00px;width:1.00px;height:2000.00px;background:#b3dafa"></div><div style="left:0.00px;top:0.00px;width:1034.10px;height:1.00px;background:#b3dafa"></div><div style="left:0.00px;top:85.10px;width:1034.10px;height:2.40px;background:#a3d3fb"></div></div></div>
<div style="left:1333.20px;top:329.00px;width:8.60px;height:666.50px;background:#e1e1e1;border-radius:4.3px"></div>
<div style="left:1333.20px;top:329.00px;width:8.60px;height:585.00px;background:#4d4d4d;border-radius:4.3px"></div>
<div style="left:283.00px;top:996.20px;width:229.50px;height:7.40px;background:#e1e1e1;border-radius:3.7px"></div>
<div style="left:513.00px;top:996.20px;width:819.50px;height:7.40px;background:#e1e1e1;border-radius:3.7px"></div>
<div style="left:1485.00px;top:69.00px;width:755.00px;height:1127.60px;background:#fff;border-left:1px solid #d4d5d8;border-bottom:1px solid #d4d5d8"></div>
<div style="left:1500.00px;top:69.00px;width:490.50px;height:886.00px;background:#fafafa"></div>
<div style="left:1990.00px;top:69.00px;width:1.00px;height:886.00px;background:#e2e2e2"></div>
<div style="left:1500.30px;top:84.30px;width:477.60px;height:52.80px;border:1px solid #e4e4e4"></div>
<div style="left:1507.00px;top:94.30px;width:105.00px;height:31.60px;background:#61cd68;border-radius:5px"></div>
<div class="t f16" style="left:1511.50px;top:96.20px;height:31.00px;line-height:31.00px;color:#fff">设置过滤条件</div>
<div style="left:1500.30px;top:135.80px;width:475.60px;height:810.00px;border:1px solid #e4e4e4;border-top:none"></div>
<div style="left:1689.80px;top:136.00px;width:1.00px;height:809.50px;background:#e4e4e4"></div>
<div style="left:1500.30px;top:225.80px;width:475.60px;height:1.00px;background:#e4e4e4"></div>
<div style="left:1509.00px;top:146.00px;width:17.00px;height:17.00px;background:#fbfbfb;border:1px solid #cfcfcf;border-radius:3px"></div>
<div style="left:1509.00px;top:172.80px;width:17.00px;height:17.00px;background:#0a74d6;border-radius:3px"></div>
<svg style="left:1509px;top:172.8px" width="17" height="17" viewBox="0 0 17 17"><polyline points="3.6,8.8 7,12.2 13.4,4.8" fill="none" stroke="#fff" stroke-width="2.2"/></svg>
<div style="left:1509.00px;top:199.50px;width:17.00px;height:17.00px;background:#0a74d6;border-radius:3px"></div>
<svg style="left:1509px;top:199.5px" width="17" height="17" viewBox="0 0 17 17"><polyline points="3.6,8.8 7,12.2 13.4,4.8" fill="none" stroke="#fff" stroke-width="2.2"/></svg>
<div class="t f16" style="left:1531.50px;top:143.00px;height:24.00px;line-height:24.00px;color:#8a8a8a">显示明细</div>
<div class="t f16" style="left:1531.50px;top:170.00px;height:24.00px;line-height:24.00px;color:#111">显示行总计</div>
<div class="t f16" style="left:1531.50px;top:196.80px;height:24.00px;line-height:24.00px;color:#111">显示列总计</div>
<div style="left:1695.00px;top:143.00px;width:276.00px;height:49.60px;background:#fff"></div>
<svg style="left:1703px;top:154.4px" width="12" height="8" viewBox="0 0 12 8"><polygon points="0.2,0.2 11,0.2 5.6,6.6" fill="#111"/></svg>
<div class="t f16" style="left:1719.30px;top:149.20px;height:24.00px;line-height:24.00px;color:#111">大区</div>
<div class="t f12" style="left:1698.40px;top:172.80px;height:18.00px;line-height:18.00px;color:#999">订单明细.订单.客户.市.大区</div>
<svg style="left:1941.4px;top:148.8px" width="18" height="18" viewBox="0 0 18 18"><path d="M1,3.4 H17 M6,3.2 Q6,1 9,1 Q12,1 12,3.2 M2.8,3.6 L3.4,15.4 Q3.5,16.8 5,16.8 H13 Q14.5,16.8 14.6,15.4 L15.2,3.6" fill="none" stroke="#ee7b6e" stroke-width="1.3"/><path d="M6.2,5.6 V14.6 M9,5.6 V14.6 M11.8,5.6 V14.6" stroke="#ee7b6e" stroke-width="1.5"/></svg>
<div style="left:1505.00px;top:231.00px;width:164.00px;height:49.00px;background:#fff"></div>
<svg style="left:1513px;top:242.4px" width="12" height="8" viewBox="0 0 12 8"><polygon points="0.2,0.2 11,0.2 5.6,6.6" fill="#111"/></svg>
<div class="t f16" style="left:1529.30px;top:237.20px;height:24.00px;line-height:24.00px;color:#111">年</div>
<div class="t f12" style="left:1508.40px;top:260.80px;height:18.00px;line-height:18.00px;color:#999">订单明细.订单.签单日期.年</div>
<svg style="left:1640px;top:235.8px" width="18" height="18" viewBox="0 0 18 18"><path d="M1,3.4 H17 M6,3.2 Q6,1 9,1 Q12,1 12,3.2 M2.8,3.6 L3.4,15.4 Q3.5,16.8 5,16.8 H13 Q14.5,16.8 14.6,15.4 L15.2,3.6" fill="none" stroke="#ee7b6e" stroke-width="1.3"/><path d="M6.2,5.6 V14.6 M9,5.6 V14.6 M11.8,5.6 V14.6" stroke="#ee7b6e" stroke-width="1.5"/></svg>
<div style="left:1505.00px;top:284.00px;width:164.00px;height:48.60px;background:#fff"></div>
<svg style="left:1513px;top:295.4px" width="12" height="8" viewBox="0 0 12 8"><polygon points="0.2,0.2 11,0.2 5.6,6.6" fill="#111"/></svg>
<div class="t f16" style="left:1529.30px;top:290.20px;height:24.00px;line-height:24.00px;color:#111">年月</div>
<div class="t f12" style="left:1508.40px;top:313.80px;height:18.00px;line-height:18.00px;color:#999">订单明细.订单.签单日期.年月</div>
<svg style="left:1640px;top:288.8px" width="18" height="18" viewBox="0 0 18 18"><path d="M1,3.4 H17 M6,3.2 Q6,1 9,1 Q12,1 12,3.2 M2.8,3.6 L3.4,15.4 Q3.5,16.8 5,16.8 H13 Q14.5,16.8 14.6,15.4 L15.2,3.6" fill="none" stroke="#ee7b6e" stroke-width="1.3"/><path d="M6.2,5.6 V14.6 M9,5.6 V14.6 M11.8,5.6 V14.6" stroke="#ee7b6e" stroke-width="1.5"/></svg>
<div style="left:1695.00px;top:233.00px;width:276.00px;height:48.80px;background:#dce9f8"></div>
<div style="left:1699.00px;top:237.00px;width:20.00px;height:20.00px;background:#fff"></div>
<svg style="left:1703px;top:244.4px" width="12" height="8" viewBox="0 0 12 8"><polygon points="0.2,0.2 11,0.2 5.6,6.6" fill="#111"/></svg>
<div class="t f16" style="left:1719.30px;top:239.20px;height:24.00px;line-height:24.00px;color:#111">数量</div>
<div class="t f12" style="left:1698.40px;top:262.80px;height:18.00px;line-height:18.00px;color:#999">订单明细.数量 求和</div>
<svg style="left:1941.4px;top:237.8px" width="18" height="18" viewBox="0 0 18 18"><path d="M1,3.4 H17 M6,3.2 Q6,1 9,1 Q12,1 12,3.2 M2.8,3.6 L3.4,15.4 Q3.5,16.8 5,16.8 H13 Q14.5,16.8 14.6,15.4 L15.2,3.6" fill="none" stroke="#ee7b6e" stroke-width="1.3"/><path d="M6.2,5.6 V14.6 M9,5.6 V14.6 M11.8,5.6 V14.6" stroke="#ee7b6e" stroke-width="1.5"/></svg>
<div style="left:1500.00px;top:954.60px;width:491.00px;height:1.00px;background:#7d7d7d"></div>
<div style="left:1990.00px;top:955.00px;width:1.20px;height:241.00px;background:#8a8a8a"></div>
<div class="t f16" style="left:1506.50px;top:969.00px;height:28.00px;line-height:28.00px;color:#333;font-weight:700">报表列表</div>
<div style="left:1891.00px;top:966.00px;width:78.00px;height:30.00px;background:#61cd68;border-radius:5px"></div>
<div class="t f16" style="left:1898.50px;top:967.40px;height:30.00px;line-height:30.00px;color:#fff">添加报表</div>
<div style="left:1500.00px;top:1002.00px;width:488.00px;height:37.60px;background:#f2f2f2"></div>
<div style="left:1988.00px;top:1002.00px;width:1.20px;height:37.60px;background:#555"></div>
<svg style="left:1505px;top:1011px" width="24" height="22" viewBox="0 0 24 22"><path d="M13.2,10 V6.6 Q13.2,2 17.4,2 Q21.6,2 21.6,6.6 V8.8" fill="none" stroke="#12962f" stroke-width="2.9"/><rect x="0.6" y="10" width="16.6" height="10.8" rx="2.4" fill="#12962f"/></svg>
<div class="t f16" style="left:1534.50px;top:1009.50px;height:26.00px;line-height:26.00px;color:#111">报表名称</div>
<svg style="left:1882.6px;top:1008.6px" width="22" height="23" viewBox="0 0 22 23"><rect x="1.2" y="1" width="19.4" height="20.8" rx="2.6" fill="#fff" stroke="#555" stroke-width="1.1"/><rect x="3.4" y="3.4" width="15" height="4" fill="#f0f0f0"/><rect x="3.8" y="9.6" width="2.7" height="8.4" fill="#a3161a"/><rect x="7.5" y="7.8" width="2.9" height="10.2" fill="#d4682f"/><rect x="11.5" y="8.8" width="2.7" height="9.2" fill="#e4b452"/><rect x="15.3" y="5.4" width="2.9" height="12.6" fill="#4b78c0"/></svg>
<svg style="left:1918.6px;top:1009px" width="21" height="22" viewBox="0 0 21 22"><path d="M11.6,6.3 H2.2 Q1.2,6.3 1.2,7.3 V14.4 Q1.2,15.4 2.2,15.4 H11.6" fill="none" stroke="#4a4a58" stroke-width="1.7"/><rect x="4.2" y="9.8" width="5.8" height="2" rx="1" fill="#777"/><path d="M16.8,6.3 H18.6 Q19.6,6.3 19.6,7.3 V14.4 Q19.6,15.4 18.6,15.4 H16.8" fill="none" stroke="#4a4a58" stroke-width="1.7"/><path d="M14.3,1.6 V19.8 M10.6,1.4 H18.2 M10.6,20 H18.2" stroke="#555566" stroke-width="2.1" fill="none"/></svg>
<svg style="left:1954px;top:1009.6px" width="20" height="21" viewBox="0 0 20 21"><path d="M0.4,3.4 H19.6 M6.6,3.2 Q6.6,1 10,1 Q13.4,1 13.4,3.2 M2.4,3.6 L2.8,17.6 Q2.9,19.4 4.8,19.4 H15.2 Q17.1,19.4 17.2,17.6 L17.6,3.6" fill="none" stroke="#f06450" stroke-width="1.5"/><path d="M6.4,6.4 V16.6 M10,6.4 V16.6 M13.6,6.4 V16.6" stroke="#f06450" stroke-width="1.8"/></svg>
<svg style="left:0;top:0" width="0" height="0"><defs><linearGradient id="tg" x1="0" y1="0" x2="1" y2="1"><stop offset="0" stop-color="#fff"/><stop offset="1" stop-color="#cfc6b8"/></linearGradient></defs></svg>
<div style="left:2022.50px;top:88.80px;width:7.00px;height:1.00px;background-image:repeating-linear-gradient(to right,#c2c2c2 0,#c2c2c2 1.3px,transparent 1.3px,transparent 2.667px)"></div>
<svg style="left:2008.70px;top:83.00px" width="13" height="13" viewBox="0 0 13 13"><rect x="0.8" y="0.8" width="11" height="11" rx="1.6" fill="url(#tg)" stroke="#8fa6c2" stroke-width="1.3"/><path d="M3.4,6.3 H9.2" stroke="#111" stroke-width="1.5"/></svg>
<div style="left:2039.10px;top:97.00px;width:1.00px;height:4.15px;background-image:repeating-linear-gradient(to bottom,#c2c2c2 0,#c2c2c2 1.3px,transparent 1.3px,transparent 2.7011px)"></div>
<svg style="left:2029.90px;top:80.00px" width="19" height="19" viewBox="0 0 19 19"><rect x="1.1" y="1.1" width="16" height="16.2" rx="1.6" fill="#fffdf8" stroke="#de9640" stroke-width="1.7"/><path d="M3.6,5 H5.2 M3.6,9.2 H5.2 M3.6,13.4 H5.2 M6.8,5 H14.2 M6.8,9.2 H14.2 M6.8,13.4 H14.2" stroke="#de9640" stroke-width="1.5"/></svg>
<div class="t f16" style="left:2053.50px;top:78.10px;height:24.00px;line-height:24.00px;color:#333;">订单明细</div>
<div style="left:2039.10px;top:101.16px;width:1.00px;height:6.15px;background-image:repeating-linear-gradient(to bottom,#c2c2c2 0,#c2c2c2 1.3px,transparent 1.3px,transparent 2.7011px)"></div>
<div style="left:2039.10px;top:119.71px;width:1.00px;height:5.75px;background-image:repeating-linear-gradient(to bottom,#c2c2c2 0,#c2c2c2 1.3px,transparent 1.3px,transparent 2.7011px)"></div>
<div style="left:2046.80px;top:113.11px;width:7.00px;height:1.00px;background-image:repeating-linear-gradient(to right,#c2c2c2 0,#c2c2c2 1.3px,transparent 1.3px,transparent 2.667px)"></div>
<svg style="left:2033.00px;top:107.31px" width="13" height="13" viewBox="0 0 13 13"><rect x="0.8" y="0.8" width="11" height="11" rx="1.6" fill="url(#tg)" stroke="#8fa6c2" stroke-width="1.3"/><path d="M3.4,6.3 H9.2" stroke="#111" stroke-width="1.5"/></svg>
<div style="left:2063.50px;top:121.31px;width:1.00px;height:4.15px;background-image:repeating-linear-gradient(to bottom,#c2c2c2 0,#c2c2c2 1.3px,transparent 1.3px,transparent 2.7011px)"></div>
<svg style="left:2055.10px;top:105.31px" width="17" height="17" viewBox="0 0 17 17"><rect x="0.8" y="0.8" width="14.6" height="14.6" rx="0.8" fill="#fff" stroke="#222" stroke-width="1.5"/><path d="M7,7.2 H13.6 M7,9.6 H13.6 M7,12 H13.6" stroke="#d4d4d4" stroke-width="1"/><rect x="7.2" y="3" width="6" height="1.8" fill="#222"/><rect x="3" y="7" width="2.2" height="6.2" fill="#222"/></svg>
<div class="t f16" style="left:2077.80px;top:102.41px;height:24.00px;line-height:24.00px;color:#333;">订单</div>
<div style="left:2039.10px;top:125.47px;width:1.00px;height:24.31px;background-image:repeating-linear-gradient(to bottom,#c2c2c2 0,#c2c2c2 1.3px,transparent 1.3px,transparent 2.7011px)"></div>
<div style="left:2063.50px;top:125.47px;width:1.00px;height:6.15px;background-image:repeating-linear-gradient(to bottom,#c2c2c2 0,#c2c2c2 1.3px,transparent 1.3px,transparent 2.7011px)"></div>
<div style="left:2063.50px;top:144.02px;width:1.00px;height:5.75px;background-image:repeating-linear-gradient(to bottom,#c2c2c2 0,#c2c2c2 1.3px,transparent 1.3px,transparent 2.7011px)"></div>
<div style="left:2071.10px;top:137.42px;width:7.00px;height:1.00px;background-image:repeating-linear-gradient(to right,#c2c2c2 0,#c2c2c2 1.3px,transparent 1.3px,transparent 2.667px)"></div>
<svg style="left:2057.30px;top:131.62px" width="13" height="13" viewBox="0 0 13 13"><rect x="0.8" y="0.8" width="11" height="11" rx="1.6" fill="url(#tg)" stroke="#8fa6c2" stroke-width="1.3"/><path d="M3.4,6.3 H9.2" stroke="#111" stroke-width="1.5"/></svg>
<div style="left:2087.90px;top:145.62px;width:1.00px;height:4.15px;background-image:repeating-linear-gradient(to bottom,#c2c2c2 0,#c2c2c2 1.3px,transparent 1.3px,transparent 2.7011px)"></div>
<svg style="left:2079.40px;top:129.62px" width="17" height="17" viewBox="0 0 17 17"><rect x="0.8" y="0.8" width="14.6" height="14.6" rx="0.8" fill="#fff" stroke="#222" stroke-width="1.5"/><path d="M7,7.2 H13.6 M7,9.6 H13.6 M7,12 H13.6" stroke="#d4d4d4" stroke-width="1"/><rect x="7.2" y="3" width="6" height="1.8" fill="#222"/><rect x="3" y="7" width="2.2" height="6.2" fill="#222"/></svg>
<div class="t f16" style="left:2102.10px;top:126.72px;height:24.00px;line-height:24.00px;color:#333;">客户</div>
<div style="left:2039.10px;top:149.78px;width:1.00px;height:24.31px;background-image:repeating-linear-gradient(to bottom,#c2c2c2 0,#c2c2c2 1.3px,transparent 1.3px,transparent 2.7011px)"></div>
<div style="left:2063.50px;top:149.78px;width:1.00px;height:24.31px;background-image:repeating-linear-gradient(to bottom,#c2c2c2 0,#c2c2c2 1.3px,transparent 1.3px,transparent 2.7011px)"></div>
<div style="left:2087.90px;top:149.78px;width:1.00px;height:24.31px;background-image:repeating-linear-gradient(to bottom,#c2c2c2 0,#c2c2c2 1.3px,transparent 1.3px,transparent 2.7011px)"></div>
<div style="left:2089.30px;top:161.73px;width:13.10px;height:1.00px;background-image:repeating-linear-gradient(to right,#c2c2c2 0,#c2c2c2 1.3px,transparent 1.3px,transparent 2.667px)"></div>
<svg style="left:2103.70px;top:153.93px" width="17" height="17" viewBox="0 0 17 17"><rect x="0.8" y="0.8" width="14.6" height="14.6" rx="0.8" fill="#fff" stroke="#222" stroke-width="1.5"/><rect x="3.2" y="4" width="2.6" height="9" fill="#e6e6e6"/><path d="M7.2,4.8 H13.4" stroke="#ccc" stroke-width="1"/><path d="M7.2,7.4 H13.4 M7.2,10 H13.4 M7.2,12.6 H13.4" stroke="#333" stroke-width="1.4"/></svg>
<div class="t f16" style="left:2126.40px;top:151.03px;height:24.00px;line-height:24.00px;color:#333;">客户名称</div>
<div style="left:2039.10px;top:174.09px;width:1.00px;height:24.31px;background-image:repeating-linear-gradient(to bottom,#c2c2c2 0,#c2c2c2 1.3px,transparent 1.3px,transparent 2.7011px)"></div>
<div style="left:2063.50px;top:174.09px;width:1.00px;height:24.31px;background-image:repeating-linear-gradient(to bottom,#c2c2c2 0,#c2c2c2 1.3px,transparent 1.3px,transparent 2.7011px)"></div>
<div style="left:2087.90px;top:174.09px;width:1.00px;height:24.31px;background-image:repeating-linear-gradient(to bottom,#c2c2c2 0,#c2c2c2 1.3px,transparent 1.3px,transparent 2.7011px)"></div>
<div style="left:2089.30px;top:186.04px;width:13.10px;height:1.00px;background-image:repeating-linear-gradient(to right,#c2c2c2 0,#c2c2c2 1.3px,transparent 1.3px,transparent 2.667px)"></div>
<svg style="left:2103.70px;top:178.24px" width="17" height="17" viewBox="0 0 17 17"><rect x="0.8" y="0.8" width="14.6" height="14.6" rx="0.8" fill="#fff" stroke="#222" stroke-width="1.5"/><rect x="3.2" y="4" width="2.6" height="9" fill="#e6e6e6"/><path d="M7.2,4.8 H13.4" stroke="#ccc" stroke-width="1"/><path d="M7.2,7.4 H13.4 M7.2,10 H13.4 M7.2,12.6 H13.4" stroke="#333" stroke-width="1.4"/></svg>
<div class="t f16" style="left:2126.40px;top:175.34px;height:24.00px;line-height:24.00px;color:#333;">联系人姓名</div>
<div style="left:2039.10px;top:198.40px;width:1.00px;height:24.31px;background-image:repeating-linear-gradient(to bottom,#c2c2c2 0,#c2c2c2 1.3px,transparent 1.3px,transparent 2.7011px)"></div>
<div style="left:2063.50px;top:198.40px;width:1.00px;height:24.31px;background-image:repeating-linear-gradient(to bottom,#c2c2c2 0,#c2c2c2 1.3px,transparent 1.3px,transparent 2.7011px)"></div>
<div style="left:2087.90px;top:198.40px;width:1.00px;height:24.31px;background-image:repeating-linear-gradient(to bottom,#c2c2c2 0,#c2c2c2 1.3px,transparent 1.3px,transparent 2.7011px)"></div>
<div style="left:2089.30px;top:210.35px;width:13.10px;height:1.00px;background-image:repeating-linear-gradient(to right,#c2c2c2 0,#c2c2c2 1.3px,transparent 1.3px,transparent 2.667px)"></div>
<svg style="left:2103.70px;top:202.55px" width="17" height="17" viewBox="0 0 17 17"><rect x="0.8" y="0.8" width="14.6" height="14.6" rx="0.8" fill="#fff" stroke="#222" stroke-width="1.5"/><rect x="3.2" y="4" width="2.6" height="9" fill="#e6e6e6"/><path d="M7.2,4.8 H13.4" stroke="#ccc" stroke-width="1"/><path d="M7.2,7.4 H13.4 M7.2,10 H13.4 M7.2,12.6 H13.4" stroke="#333" stroke-width="1.4"/></svg>
<div class="t f16" style="left:2126.40px;top:199.65px;height:24.00px;line-height:24.00px;color:#333;">联系人职务</div>
<div style="left:2039.10px;top:222.70px;width:1.00px;height:24.31px;background-image:repeating-linear-gradient(to bottom,#c2c2c2 0,#c2c2c2 1.3px,transparent 1.3px,transparent 2.7011px)"></div>
<div style="left:2063.50px;top:222.70px;width:1.00px;height:24.31px;background-image:repeating-linear-gradient(to bottom,#c2c2c2 0,#c2c2c2 1.3px,transparent 1.3px,transparent 2.7011px)"></div>
<div style="left:2087.90px;top:222.70px;width:1.00px;height:6.15px;background-image:repeating-linear-gradient(to bottom,#c2c2c2 0,#c2c2c2 1.3px,transparent 1.3px,transparent 2.7011px)"></div>
<div style="left:2087.90px;top:241.26px;width:1.00px;height:5.75px;background-image:repeating-linear-gradient(to bottom,#c2c2c2 0,#c2c2c2 1.3px,transparent 1.3px,transparent 2.7011px)"></div>
<div style="left:2095.40px;top:234.66px;width:7.00px;height:1.00px;background-image:repeating-linear-gradient(to right,#c2c2c2 0,#c2c2c2 1.3px,transparent 1.3px,transparent 2.667px)"></div>
<svg style="left:2081.60px;top:228.86px" width="13" height="13" viewBox="0 0 13 13"><rect x="0.8" y="0.8" width="11" height="11" rx="1.6" fill="url(#tg)" stroke="#8fa6c2" stroke-width="1.3"/><path d="M3.4,6.3 H9.2" stroke="#111" stroke-width="1.5"/></svg>
<div style="left:2112.30px;top:242.86px;width:1.00px;height:4.15px;background-image:repeating-linear-gradient(to bottom,#c2c2c2 0,#c2c2c2 1.3px,transparent 1.3px,transparent 2.7011px)"></div>
<svg style="left:2103.70px;top:226.86px" width="17" height="17" viewBox="0 0 17 17"><rect x="0.8" y="0.8" width="14.6" height="14.6" rx="0.8" fill="#fff" stroke="#222" stroke-width="1.5"/><path d="M7,7.2 H13.6 M7,9.6 H13.6 M7,12 H13.6" stroke="#d4d4d4" stroke-width="1"/><rect x="7.2" y="3" width="6" height="1.8" fill="#222"/><rect x="3" y="7" width="2.2" height="6.2" fill="#222"/></svg>
<div class="t f16" style="left:2126.40px;top:223.96px;height:24.00px;line-height:24.00px;color:#333;">市</div>
<div style="left:2039.10px;top:247.01px;width:1.00px;height:24.31px;background-image:repeating-linear-gradient(to bottom,#c2c2c2 0,#c2c2c2 1.3px,transparent 1.3px,transparent 2.7011px)"></div>
<div style="left:2063.50px;top:247.01px;width:1.00px;height:24.31px;background-image:repeating-linear-gradient(to bottom,#c2c2c2 0,#c2c2c2 1.3px,transparent 1.3px,transparent 2.7011px)"></div>
<div style="left:2087.90px;top:247.01px;width:1.00px;height:24.31px;background-image:repeating-linear-gradient(to bottom,#c2c2c2 0,#c2c2c2 1.3px,transparent 1.3px,transparent 2.7011px)"></div>
<div style="left:2112.30px;top:247.01px;width:1.00px;height:6.15px;background-image:repeating-linear-gradient(to bottom,#c2c2c2 0,#c2c2c2 1.3px,transparent 1.3px,transparent 2.7011px)"></div>
<div style="left:2112.30px;top:265.57px;width:1.00px;height:5.75px;background-image:repeating-linear-gradient(to bottom,#c2c2c2 0,#c2c2c2 1.3px,transparent 1.3px,transparent 2.7011px)"></div>
<div style="left:2119.70px;top:258.97px;width:7.00px;height:1.00px;background-image:repeating-linear-gradient(to right,#c2c2c2 0,#c2c2c2 1.3px,transparent 1.3px,transparent 2.667px)"></div>
<svg style="left:2105.90px;top:253.17px" width="13" height="13" viewBox="0 0 13 13"><rect x="0.8" y="0.8" width="11" height="11" rx="1.6" fill="url(#tg)" stroke="#8fa6c2" stroke-width="1.3"/><path d="M3.4,6.3 H9.2" stroke="#111" stroke-width="1.5"/><path d="M6.3,3.4 V9.2" stroke="#111" stroke-width="1.5"/></svg>
<svg style="left:2126.00px;top:251.07px" width="21" height="17" viewBox="0 0 21 17"><rect x="3.4" y="0.9" width="10" height="9" fill="#e8f3fc" stroke="#17486a" stroke-width="1.7"/><path d="M8.6,3.6 H11.6 M8.6,6 H11.6" stroke="#7db8e8" stroke-width="1.2"/><path d="M0,5.6 H5.4" stroke="#1d5a86" stroke-width="1.3"/><polygon points="4.8,3.2 7.8,5.6 4.8,8" fill="#1d5a86"/><rect x="8.6" y="6" width="10" height="8.9" fill="#f4f9fe" stroke="#17486a" stroke-width="1.7"/><path d="M13,9.4 H16.6 M13,12 H16.6" stroke="#6aaee6" stroke-width="1.3"/></svg>
<div class="t f16" style="left:2150.70px;top:248.27px;height:24.00px;line-height:24.00px;color:#333;">省</div>
<div style="left:2039.10px;top:271.33px;width:1.00px;height:24.31px;background-image:repeating-linear-gradient(to bottom,#c2c2c2 0,#c2c2c2 1.3px,transparent 1.3px,transparent 2.7011px)"></div>
<div style="left:2063.50px;top:271.33px;width:1.00px;height:24.31px;background-image:repeating-linear-gradient(to bottom,#c2c2c2 0,#c2c2c2 1.3px,transparent 1.3px,transparent 2.7011px)"></div>
<div style="left:2087.90px;top:271.33px;width:1.00px;height:24.31px;background-image:repeating-linear-gradient(to bottom,#c2c2c2 0,#c2c2c2 1.3px,transparent 1.3px,transparent 2.7011px)"></div>
<div style="left:2112.30px;top:271.33px;width:1.00px;height:6.15px;background-image:repeating-linear-gradient(to bottom,#c2c2c2 0,#c2c2c2 1.3px,transparent 1.3px,transparent 2.7011px)"></div>
<div style="left:2112.30px;top:289.88px;width:1.00px;height:5.75px;background-image:repeating-linear-gradient(to bottom,#c2c2c2 0,#c2c2c2 1.3px,transparent 1.3px,transparent 2.7011px)"></div>
<div style="left:2119.70px;top:283.28px;width:7.00px;height:1.00px;background-image:repeating-linear-gradient(to right,#c2c2c2 0,#c2c2c2 1.3px,transparent 1.3px,transparent 2.667px)"></div>
<svg style="left:2105.90px;top:277.48px" width="13" height="13" viewBox="0 0 13 13"><rect x="0.8" y="0.8" width="11" height="11" rx="1.6" fill="url(#tg)" stroke="#8fa6c2" stroke-width="1.3"/><path d="M3.4,6.3 H9.2" stroke="#111" stroke-width="1.5"/><path d="M6.3,3.4 V9.2" stroke="#111" stroke-width="1.5"/></svg>
<svg style="left:2126.00px;top:275.38px" width="21" height="17" viewBox="0 0 21 17"><rect x="3.4" y="0.9" width="10" height="9" fill="#e8f3fc" stroke="#17486a" stroke-width="1.7"/><path d="M8.6,3.6 H11.6 M8.6,6 H11.6" stroke="#7db8e8" stroke-width="1.2"/><path d="M0,5.6 H5.4" stroke="#1d5a86" stroke-width="1.3"/><polygon points="4.8,3.2 7.8,5.6 4.8,8" fill="#1d5a86"/><rect x="8.6" y="6" width="10" height="8.9" fill="#f4f9fe" stroke="#17486a" stroke-width="1.7"/><path d="M13,9.4 H16.6 M13,12 H16.6" stroke="#6aaee6" stroke-width="1.3"/></svg>
<div class="t f16" style="left:2150.70px;top:272.58px;height:24.00px;line-height:24.00px;color:#333;font-weight:700;">大区</div>
<div style="left:2039.10px;top:295.63px;width:1.00px;height:24.31px;background-image:repeating-linear-gradient(to bottom,#c2c2c2 0,#c2c2c2 1.3px,transparent 1.3px,transparent 2.7011px)"></div>
<div style="left:2063.50px;top:295.63px;width:1.00px;height:24.31px;background-image:repeating-linear-gradient(to bottom,#c2c2c2 0,#c2c2c2 1.3px,transparent 1.3px,transparent 2.7011px)"></div>
<div style="left:2087.90px;top:295.63px;width:1.00px;height:24.31px;background-image:repeating-linear-gradient(to bottom,#c2c2c2 0,#c2c2c2 1.3px,transparent 1.3px,transparent 2.7011px)"></div>
<div style="left:2112.30px;top:295.63px;width:1.00px;height:24.31px;background-image:repeating-linear-gradient(to bottom,#c2c2c2 0,#c2c2c2 1.3px,transparent 1.3px,transparent 2.7011px)"></div>
<div style="left:2113.70px;top:307.59px;width:13.00px;height:1.00px;background-image:repeating-linear-gradient(to right,#c2c2c2 0,#c2c2c2 1.3px,transparent 1.3px,transparent 2.667px)"></div>
<svg style="left:2128.00px;top:299.79px" width="17" height="17" viewBox="0 0 17 17"><rect x="0.8" y="0.8" width="14.6" height="14.6" rx="0.8" fill="#fff" stroke="#222" stroke-width="1.5"/><rect x="3.2" y="4" width="2.6" height="9" fill="#e6e6e6"/><path d="M7.2,4.8 H13.4" stroke="#ccc" stroke-width="1"/><path d="M7.2,7.4 H13.4 M7.2,10 H13.4 M7.2,12.6 H13.4" stroke="#333" stroke-width="1.4"/></svg>
<div class="t f16" style="left:2150.70px;top:296.89px;height:24.00px;line-height:24.00px;color:#333;">名称</div>
<div style="left:2039.10px;top:319.95px;width:1.00px;height:24.31px;background-image:repeating-linear-gradient(to bottom,#c2c2c2 0,#c2c2c2 1.3px,transparent 1.3px,transparent 2.7011px)"></div>
<div style="left:2063.50px;top:319.95px;width:1.00px;height:24.31px;background-image:repeating-linear-gradient(to bottom,#c2c2c2 0,#c2c2c2 1.3px,transparent 1.3px,transparent 2.7011px)"></div>
<div style="left:2087.90px;top:319.95px;width:1.00px;height:24.31px;background-image:repeating-linear-gradient(to bottom,#c2c2c2 0,#c2c2c2 1.3px,transparent 1.3px,transparent 2.7011px)"></div>
<div style="left:2112.30px;top:319.95px;width:1.00px;height:12.15px;background-image:repeating-linear-gradient(to bottom,#c2c2c2 0,#c2c2c2 1.3px,transparent 1.3px,transparent 2.7011px)"></div>
<div style="left:2113.70px;top:331.90px;width:13.00px;height:1.00px;background-image:repeating-linear-gradient(to right,#c2c2c2 0,#c2c2c2 1.3px,transparent 1.3px,transparent 2.667px)"></div>
<svg style="left:2128.00px;top:324.10px" width="17" height="17" viewBox="0 0 17 17"><rect x="0.8" y="0.8" width="14.6" height="14.6" rx="0.8" fill="#fff" stroke="#222" stroke-width="1.5"/><rect x="3.2" y="4" width="2.6" height="9" fill="#e6e6e6"/><path d="M7.2,4.8 H13.4" stroke="#ccc" stroke-width="1"/><path d="M7.2,7.4 H13.4 M7.2,10 H13.4 M7.2,12.6 H13.4" stroke="#333" stroke-width="1.4"/></svg>
<div class="t f16" style="left:2150.70px;top:321.20px;height:24.00px;line-height:24.00px;color:#333;">人口</div>
<div style="left:2039.10px;top:344.25px;width:1.00px;height:24.31px;background-image:repeating-linear-gradient(to bottom,#c2c2c2 0,#c2c2c2 1.3px,transparent 1.3px,transparent 2.7011px)"></div>
<div style="left:2063.50px;top:344.25px;width:1.00px;height:24.31px;background-image:repeating-linear-gradient(to bottom,#c2c2c2 0,#c2c2c2 1.3px,transparent 1.3px,transparent 2.7011px)"></div>
<div style="left:2087.90px;top:344.25px;width:1.00px;height:24.31px;background-image:repeating-linear-gradient(to bottom,#c2c2c2 0,#c2c2c2 1.3px,transparent 1.3px,transparent 2.7011px)"></div>
<div style="left:2089.30px;top:356.21px;width:13.10px;height:1.00px;background-image:repeating-linear-gradient(to right,#c2c2c2 0,#c2c2c2 1.3px,transparent 1.3px,transparent 2.667px)"></div>
<svg style="left:2103.70px;top:348.41px" width="17" height="17" viewBox="0 0 17 17"><rect x="0.8" y="0.8" width="14.6" height="14.6" rx="0.8" fill="#fff" stroke="#222" stroke-width="1.5"/><rect x="3.2" y="4" width="2.6" height="9" fill="#e6e6e6"/><path d="M7.2,4.8 H13.4" stroke="#ccc" stroke-width="1"/><path d="M7.2,7.4 H13.4 M7.2,10 H13.4 M7.2,12.6 H13.4" stroke="#333" stroke-width="1.4"/></svg>
<div class="t f16" style="left:2126.40px;top:345.51px;height:24.00px;line-height:24.00px;color:#333;">VIP级别</div>
<div style="left:2039.10px;top:368.56px;width:1.00px;height:24.31px;background-image:repeating-linear-gradient(to bottom,#c2c2c2 0,#c2c2c2 1.3px,transparent 1.3px,transparent 2.7011px)"></div>
<div style="left:2063.50px;top:368.56px;width:1.00px;height:24.31px;background-image:repeating-linear-gradient(to bottom,#c2c2c2 0,#c2c2c2 1.3px,transparent 1.3px,transparent 2.7011px)"></div>
<div style="left:2087.90px;top:368.56px;width:1.00px;height:24.31px;background-image:repeating-linear-gradient(to bottom,#c2c2c2 0,#c2c2c2 1.3px,transparent 1.3px,transparent 2.7011px)"></div>
<div style="left:2089.30px;top:380.52px;width:13.10px;height:1.00px;background-image:repeating-linear-gradient(to right,#c2c2c2 0,#c2c2c2 1.3px,transparent 1.3px,transparent 2.667px)"></div>
<svg style="left:2103.70px;top:372.72px" width="17" height="17" viewBox="0 0 17 17"><rect x="0.8" y="0.8" width="14.6" height="14.6" rx="0.8" fill="#fff" stroke="#222" stroke-width="1.5"/><rect x="3.2" y="4" width="2.6" height="9" fill="#e6e6e6"/><path d="M7.2,4.8 H13.4" stroke="#ccc" stroke-width="1"/><path d="M7.2,7.4 H13.4 M7.2,10 H13.4 M7.2,12.6 H13.4" stroke="#333" stroke-width="1.4"/></svg>
<div class="t f16" style="left:2126.40px;top:369.82px;height:24.00px;line-height:24.00px;color:#333;">VIP折扣率</div>
<div style="left:2039.10px;top:392.88px;width:1.00px;height:24.31px;background-image:repeating-linear-gradient(to bottom,#c2c2c2 0,#c2c2c2 1.3px,transparent 1.3px,transparent 2.7011px)"></div>
<div style="left:2063.50px;top:392.88px;width:1.00px;height:24.31px;background-image:repeating-linear-gradient(to bottom,#c2c2c2 0,#c2c2c2 1.3px,transparent 1.3px,transparent 2.7011px)"></div>
<div style="left:2087.90px;top:392.88px;width:1.00px;height:6.15px;background-image:repeating-linear-gradient(to bottom,#c2c2c2 0,#c2c2c2 1.3px,transparent 1.3px,transparent 2.7011px)"></div>
<div style="left:2087.90px;top:411.43px;width:1.00px;height:5.75px;background-image:repeating-linear-gradient(to bottom,#c2c2c2 0,#c2c2c2 1.3px,transparent 1.3px,transparent 2.7011px)"></div>
<div style="left:2095.40px;top:404.83px;width:7.00px;height:1.00px;background-image:repeating-linear-gradient(to right,#c2c2c2 0,#c2c2c2 1.3px,transparent 1.3px,transparent 2.667px)"></div>
<svg style="left:2081.60px;top:399.03px" width="13" height="13" viewBox="0 0 13 13"><rect x="0.8" y="0.8" width="11" height="11" rx="1.6" fill="url(#tg)" stroke="#8fa6c2" stroke-width="1.3"/><path d="M3.4,6.3 H9.2" stroke="#111" stroke-width="1.5"/><path d="M6.3,3.4 V9.2" stroke="#111" stroke-width="1.5"/></svg>
<svg style="left:2103.70px;top:397.03px" width="17" height="17" viewBox="0 0 17 17"><rect x="0.8" y="0.8" width="14.6" height="14.6" rx="0.8" fill="#fff" stroke="#222" stroke-width="1.5"/><path d="M7,7.2 H13.6 M7,9.6 H13.6 M7,12 H13.6" stroke="#d4d4d4" stroke-width="1"/><rect x="7.2" y="3" width="6" height="1.8" fill="#222"/><rect x="3" y="7" width="2.2" height="6.2" fill="#222"/></svg>
<div class="t f16" style="left:2126.40px;top:394.13px;height:24.00px;line-height:24.00px;color:#333;">VIP起始时间</div>
<div style="left:2039.10px;top:417.19px;width:1.00px;height:24.31px;background-image:repeating-linear-gradient(to bottom,#c2c2c2 0,#c2c2c2 1.3px,transparent 1.3px,transparent 2.7011px)"></div>
<div style="left:2063.50px;top:417.19px;width:1.00px;height:24.31px;background-image:repeating-linear-gradient(to bottom,#c2c2c2 0,#c2c2c2 1.3px,transparent 1.3px,transparent 2.7011px)"></div>
<div style="left:2087.90px;top:417.19px;width:1.00px;height:6.15px;background-image:repeating-linear-gradient(to bottom,#c2c2c2 0,#c2c2c2 1.3px,transparent 1.3px,transparent 2.7011px)"></div>
<div style="left:2095.40px;top:429.14px;width:7.00px;height:1.00px;background-image:repeating-linear-gradient(to right,#c2c2c2 0,#c2c2c2 1.3px,transparent 1.3px,transparent 2.667px)"></div>
<svg style="left:2081.60px;top:423.34px" width="13" height="13" viewBox="0 0 13 13"><rect x="0.8" y="0.8" width="11" height="11" rx="1.6" fill="url(#tg)" stroke="#8fa6c2" stroke-width="1.3"/><path d="M3.4,6.3 H9.2" stroke="#111" stroke-width="1.5"/><path d="M6.3,3.4 V9.2" stroke="#111" stroke-width="1.5"/></svg>
<svg style="left:2103.70px;top:421.34px" width="17" height="17" viewBox="0 0 17 17"><rect x="0.8" y="0.8" width="14.6" height="14.6" rx="0.8" fill="#fff" stroke="#222" stroke-width="1.5"/><path d="M7,7.2 H13.6 M7,9.6 H13.6 M7,12 H13.6" stroke="#d4d4d4" stroke-width="1"/><rect x="7.2" y="3" width="6" height="1.8" fill="#222"/><rect x="3" y="7" width="2.2" height="6.2" fill="#222"/></svg>
<div class="t f16" style="left:2126.40px;top:418.44px;height:24.00px;line-height:24.00px;color:#333;">VIP结束时间</div>
<div style="left:2039.10px;top:441.50px;width:1.00px;height:24.31px;background-image:repeating-linear-gradient(to bottom,#c2c2c2 0,#c2c2c2 1.3px,transparent 1.3px,transparent 2.7011px)"></div>
<div style="left:2063.50px;top:441.50px;width:1.00px;height:6.15px;background-image:repeating-linear-gradient(to bottom,#c2c2c2 0,#c2c2c2 1.3px,transparent 1.3px,transparent 2.7011px)"></div>
<div style="left:2063.50px;top:460.05px;width:1.00px;height:5.75px;background-image:repeating-linear-gradient(to bottom,#c2c2c2 0,#c2c2c2 1.3px,transparent 1.3px,transparent 2.7011px)"></div>
<div style="left:2071.10px;top:453.45px;width:7.00px;height:1.00px;background-image:repeating-linear-gradient(to right,#c2c2c2 0,#c2c2c2 1.3px,transparent 1.3px,transparent 2.667px)"></div>
<svg style="left:2057.30px;top:447.65px" width="13" height="13" viewBox="0 0 13 13"><rect x="0.8" y="0.8" width="11" height="11" rx="1.6" fill="url(#tg)" stroke="#8fa6c2" stroke-width="1.3"/><path d="M3.4,6.3 H9.2" stroke="#111" stroke-width="1.5"/><path d="M6.3,3.4 V9.2" stroke="#111" stroke-width="1.5"/></svg>
<svg style="left:2079.40px;top:445.65px" width="17" height="17" viewBox="0 0 17 17"><rect x="0.8" y="0.8" width="14.6" height="14.6" rx="0.8" fill="#fff" stroke="#222" stroke-width="1.5"/><path d="M7,7.2 H13.6 M7,9.6 H13.6 M7,12 H13.6" stroke="#d4d4d4" stroke-width="1"/><rect x="7.2" y="3" width="6" height="1.8" fill="#222"/><rect x="3" y="7" width="2.2" height="6.2" fill="#222"/></svg>
<div class="t f16" style="left:2102.10px;top:442.75px;height:24.00px;line-height:24.00px;color:#333;">雇员</div>
<div style="left:2039.10px;top:465.81px;width:1.00px;height:24.31px;background-image:repeating-linear-gradient(to bottom,#c2c2c2 0,#c2c2c2 1.3px,transparent 1.3px,transparent 2.7011px)"></div>
<div style="left:2063.50px;top:465.81px;width:1.00px;height:6.15px;background-image:repeating-linear-gradient(to bottom,#c2c2c2 0,#c2c2c2 1.3px,transparent 1.3px,transparent 2.7011px)"></div>
<div style="left:2063.50px;top:484.36px;width:1.00px;height:5.75px;background-image:repeating-linear-gradient(to bottom,#c2c2c2 0,#c2c2c2 1.3px,transparent 1.3px,transparent 2.7011px)"></div>
<div style="left:2071.10px;top:477.76px;width:7.00px;height:1.00px;background-image:repeating-linear-gradient(to right,#c2c2c2 0,#c2c2c2 1.3px,transparent 1.3px,transparent 2.667px)"></div>
<svg style="left:2057.30px;top:471.96px" width="13" height="13" viewBox="0 0 13 13"><rect x="0.8" y="0.8" width="11" height="11" rx="1.6" fill="url(#tg)" stroke="#8fa6c2" stroke-width="1.3"/><path d="M3.4,6.3 H9.2" stroke="#111" stroke-width="1.5"/><path d="M6.3,3.4 V9.2" stroke="#111" stroke-width="1.5"/></svg>
<svg style="left:2079.40px;top:469.96px" width="17" height="17" viewBox="0 0 17 17"><rect x="0.8" y="0.8" width="14.6" height="14.6" rx="0.8" fill="#fff" stroke="#222" stroke-width="1.5"/><path d="M7,7.2 H13.6 M7,9.6 H13.6 M7,12 H13.6" stroke="#d4d4d4" stroke-width="1"/><rect x="7.2" y="3" width="6" height="1.8" fill="#222"/><rect x="3" y="7" width="2.2" height="6.2" fill="#222"/></svg>
<div class="t f16" style="left:2102.10px;top:467.06px;height:24.00px;line-height:24.00px;color:#333;">发货日期</div>
<div style="left:2039.10px;top:490.12px;width:1.00px;height:24.31px;background-image:repeating-linear-gradient(to bottom,#c2c2c2 0,#c2c2c2 1.3px,transparent 1.3px,transparent 2.7011px)"></div>
<div style="left:2063.50px;top:490.12px;width:1.00px;height:6.15px;background-image:repeating-linear-gradient(to bottom,#c2c2c2 0,#c2c2c2 1.3px,transparent 1.3px,transparent 2.7011px)"></div>
<div style="left:2071.10px;top:502.07px;width:7.00px;height:1.00px;background-image:repeating-linear-gradient(to right,#c2c2c2 0,#c2c2c2 1.3px,transparent 1.3px,transparent 2.667px)"></div>
<svg style="left:2057.30px;top:496.27px" width="13" height="13" viewBox="0 0 13 13"><rect x="0.8" y="0.8" width="11" height="11" rx="1.6" fill="url(#tg)" stroke="#8fa6c2" stroke-width="1.3"/><path d="M3.4,6.3 H9.2" stroke="#111" stroke-width="1.5"/></svg>
<div style="left:2087.90px;top:510.27px;width:1.00px;height:4.15px;background-image:repeating-linear-gradient(to bottom,#c2c2c2 0,#c2c2c2 1.3px,transparent 1.3px,transparent 2.7011px)"></div>
<svg style="left:2079.40px;top:494.27px" width="17" height="17" viewBox="0 0 17 17"><rect x="0.8" y="0.8" width="14.6" height="14.6" rx="0.8" fill="#fff" stroke="#222" stroke-width="1.5"/><path d="M7,7.2 H13.6 M7,9.6 H13.6 M7,12 H13.6" stroke="#d4d4d4" stroke-width="1"/><rect x="7.2" y="3" width="6" height="1.8" fill="#222"/><rect x="3" y="7" width="2.2" height="6.2" fill="#222"/></svg>
<div class="t f16" style="left:2102.10px;top:491.37px;height:24.00px;line-height:24.00px;color:#333;">签单日期</div>
<div style="left:2039.10px;top:514.42px;width:1.00px;height:24.31px;background-image:repeating-linear-gradient(to bottom,#c2c2c2 0,#c2c2c2 1.3px,transparent 1.3px,transparent 2.7011px)"></div>
<div style="left:2087.90px;top:514.42px;width:1.00px;height:24.31px;background-image:repeating-linear-gradient(to bottom,#c2c2c2 0,#c2c2c2 1.3px,transparent 1.3px,transparent 2.7011px)"></div>
<div style="left:2089.30px;top:526.38px;width:10.10px;height:1.00px;background-image:repeating-linear-gradient(to right,#c2c2c2 0,#c2c2c2 1.3px,transparent 1.3px,transparent 2.667px)"></div>
<svg style="left:2101.70px;top:518.48px" width="21" height="17" viewBox="0 0 21 17"><rect x="3.4" y="0.9" width="10" height="9" fill="#e8f3fc" stroke="#17486a" stroke-width="1.7"/><path d="M8.6,3.6 H11.6 M8.6,6 H11.6" stroke="#7db8e8" stroke-width="1.2"/><path d="M0,5.6 H5.4" stroke="#1d5a86" stroke-width="1.3"/><polygon points="4.8,3.2 7.8,5.6 4.8,8" fill="#1d5a86"/><rect x="8.6" y="6" width="10" height="8.9" fill="#f4f9fe" stroke="#17486a" stroke-width="1.7"/><path d="M13,9.4 H16.6 M13,12 H16.6" stroke="#6aaee6" stroke-width="1.3"/></svg>
<div class="t f16" style="left:2126.40px;top:515.68px;height:24.00px;line-height:24.00px;color:#333;font-weight:700;">年月</div>
<div style="left:2039.10px;top:538.74px;width:1.00px;height:24.31px;background-image:repeating-linear-gradient(to bottom,#c2c2c2 0,#c2c2c2 1.3px,transparent 1.3px,transparent 2.7011px)"></div>
<div style="left:2087.90px;top:538.74px;width:1.00px;height:24.31px;background-image:repeating-linear-gradient(to bottom,#c2c2c2 0,#c2c2c2 1.3px,transparent 1.3px,transparent 2.7011px)"></div>
<div style="left:2089.30px;top:550.69px;width:10.10px;height:1.00px;background-image:repeating-linear-gradient(to right,#c2c2c2 0,#c2c2c2 1.3px,transparent 1.3px,transparent 2.667px)"></div>
<svg style="left:2101.70px;top:542.79px" width="21" height="17" viewBox="0 0 21 17"><rect x="3.4" y="0.9" width="10" height="9" fill="#e8f3fc" stroke="#17486a" stroke-width="1.7"/><path d="M8.6,3.6 H11.6 M8.6,6 H11.6" stroke="#7db8e8" stroke-width="1.2"/><path d="M0,5.6 H5.4" stroke="#1d5a86" stroke-width="1.3"/><polygon points="4.8,3.2 7.8,5.6 4.8,8" fill="#1d5a86"/><rect x="8.6" y="6" width="10" height="8.9" fill="#f4f9fe" stroke="#17486a" stroke-width="1.7"/><path d="M13,9.4 H16.6 M13,12 H16.6" stroke="#6aaee6" stroke-width="1.3"/></svg>
<div class="t f16" style="left:2126.40px;top:539.99px;height:24.00px;line-height:24.00px;color:#333;font-weight:700;">年</div>
<div style="left:2039.10px;top:563.05px;width:1.00px;height:24.31px;background-image:repeating-linear-gradient(to bottom,#c2c2c2 0,#c2c2c2 1.3px,transparent 1.3px,transparent 2.7011px)"></div>
<div style="left:2087.90px;top:563.05px;width:1.00px;height:24.31px;background-image:repeating-linear-gradient(to bottom,#c2c2c2 0,#c2c2c2 1.3px,transparent 1.3px,transparent 2.7011px)"></div>
<div style="left:2089.30px;top:575.00px;width:10.10px;height:1.00px;background-image:repeating-linear-gradient(to right,#c2c2c2 0,#c2c2c2 1.3px,transparent 1.3px,transparent 2.667px)"></div>
<svg style="left:2101.70px;top:567.10px" width="21" height="17" viewBox="0 0 21 17"><rect x="3.4" y="0.9" width="10" height="9" fill="#e8f3fc" stroke="#17486a" stroke-width="1.7"/><path d="M8.6,3.6 H11.6 M8.6,6 H11.6" stroke="#7db8e8" stroke-width="1.2"/><path d="M0,5.6 H5.4" stroke="#1d5a86" stroke-width="1.3"/><polygon points="4.8,3.2 7.8,5.6 4.8,8" fill="#1d5a86"/><rect x="8.6" y="6" width="10" height="8.9" fill="#f4f9fe" stroke="#17486a" stroke-width="1.7"/><path d="M13,9.4 H16.6 M13,12 H16.6" stroke="#6aaee6" stroke-width="1.3"/></svg>
<div class="t f16" style="left:2126.40px;top:564.30px;height:24.00px;line-height:24.00px;color:#333;">年季度</div>
<div style="left:2039.10px;top:587.36px;width:1.00px;height:24.31px;background-image:repeating-linear-gradient(to bottom,#c2c2c2 0,#c2c2c2 1.3px,transparent 1.3px,transparent 2.7011px)"></div>
<div style="left:2087.90px;top:587.36px;width:1.00px;height:24.31px;background-image:repeating-linear-gradient(to bottom,#c2c2c2 0,#c2c2c2 1.3px,transparent 1.3px,transparent 2.7011px)"></div>
<div style="left:2089.30px;top:599.31px;width:10.10px;height:1.00px;background-image:repeating-linear-gradient(to right,#c2c2c2 0,#c2c2c2 1.3px,transparent 1.3px,transparent 2.667px)"></div>
<svg style="left:2101.70px;top:591.41px" width="21" height="17" viewBox="0 0 21 17"><rect x="3.4" y="0.9" width="10" height="9" fill="#e8f3fc" stroke="#17486a" stroke-width="1.7"/><path d="M8.6,3.6 H11.6 M8.6,6 H11.6" stroke="#7db8e8" stroke-width="1.2"/><path d="M0,5.6 H5.4" stroke="#1d5a86" stroke-width="1.3"/><polygon points="4.8,3.2 7.8,5.6 4.8,8" fill="#1d5a86"/><rect x="8.6" y="6" width="10" height="8.9" fill="#f4f9fe" stroke="#17486a" stroke-width="1.7"/><path d="M13,9.4 H16.6 M13,12 H16.6" stroke="#6aaee6" stroke-width="1.3"/></svg>
<div class="t f16" style="left:2126.40px;top:588.61px;height:24.00px;line-height:24.00px;color:#333;">周几</div>
<div style="left:2039.10px;top:611.66px;width:1.00px;height:24.31px;background-image:repeating-linear-gradient(to bottom,#c2c2c2 0,#c2c2c2 1.3px,transparent 1.3px,transparent 2.7011px)"></div>
<div style="left:2087.90px;top:611.66px;width:1.00px;height:24.31px;background-image:repeating-linear-gradient(to bottom,#c2c2c2 0,#c2c2c2 1.3px,transparent 1.3px,transparent 2.7011px)"></div>
<div style="left:2089.30px;top:623.62px;width:10.10px;height:1.00px;background-image:repeating-linear-gradient(to right,#c2c2c2 0,#c2c2c2 1.3px,transparent 1.3px,transparent 2.667px)"></div>
<svg style="left:2101.70px;top:615.72px" width="21" height="17" viewBox="0 0 21 17"><rect x="3.4" y="0.9" width="10" height="9" fill="#e8f3fc" stroke="#17486a" stroke-width="1.7"/><path d="M8.6,3.6 H11.6 M8.6,6 H11.6" stroke="#7db8e8" stroke-width="1.2"/><path d="M0,5.6 H5.4" stroke="#1d5a86" stroke-width="1.3"/><polygon points="4.8,3.2 7.8,5.6 4.8,8" fill="#1d5a86"/><rect x="8.6" y="6" width="10" height="8.9" fill="#f4f9fe" stroke="#17486a" stroke-width="1.7"/><path d="M13,9.4 H16.6 M13,12 H16.6" stroke="#6aaee6" stroke-width="1.3"/></svg>
<div class="t f16" style="left:2126.40px;top:612.92px;height:24.00px;line-height:24.00px;color:#333;">月份</div>
<div style="left:2039.10px;top:635.98px;width:1.00px;height:24.31px;background-image:repeating-linear-gradient(to bottom,#c2c2c2 0,#c2c2c2 1.3px,transparent 1.3px,transparent 2.7011px)"></div>
<div style="left:2087.90px;top:635.98px;width:1.00px;height:24.31px;background-image:repeating-linear-gradient(to bottom,#c2c2c2 0,#c2c2c2 1.3px,transparent 1.3px,transparent 2.7011px)"></div>
<div style="left:2089.30px;top:647.93px;width:10.10px;height:1.00px;background-image:repeating-linear-gradient(to right,#c2c2c2 0,#c2c2c2 1.3px,transparent 1.3px,transparent 2.667px)"></div>
<svg style="left:2101.70px;top:640.03px" width="21" height="17" viewBox="0 0 21 17"><rect x="3.4" y="0.9" width="10" height="9" fill="#e8f3fc" stroke="#17486a" stroke-width="1.7"/><path d="M8.6,3.6 H11.6 M8.6,6 H11.6" stroke="#7db8e8" stroke-width="1.2"/><path d="M0,5.6 H5.4" stroke="#1d5a86" stroke-width="1.3"/><polygon points="4.8,3.2 7.8,5.6 4.8,8" fill="#1d5a86"/><rect x="8.6" y="6" width="10" height="8.9" fill="#f4f9fe" stroke="#17486a" stroke-width="1.7"/><path d="M13,9.4 H16.6 M13,12 H16.6" stroke="#6aaee6" stroke-width="1.3"/></svg>
<div class="t f16" style="left:2126.40px;top:637.23px;height:24.00px;line-height:24.00px;color:#333;">周数</div>
<div style="left:2039.10px;top:660.28px;width:1.00px;height:24.31px;background-image:repeating-linear-gradient(to bottom,#c2c2c2 0,#c2c2c2 1.3px,transparent 1.3px,transparent 2.7011px)"></div>
<div style="left:2087.90px;top:660.28px;width:1.00px;height:24.31px;background-image:repeating-linear-gradient(to bottom,#c2c2c2 0,#c2c2c2 1.3px,transparent 1.3px,transparent 2.7011px)"></div>
<div style="left:2089.30px;top:672.24px;width:10.10px;height:1.00px;background-image:repeating-linear-gradient(to right,#c2c2c2 0,#c2c2c2 1.3px,transparent 1.3px,transparent 2.667px)"></div>
<svg style="left:2101.70px;top:664.34px" width="21" height="17" viewBox="0 0 21 17"><rect x="3.4" y="0.9" width="10" height="9" fill="#e8f3fc" stroke="#17486a" stroke-width="1.7"/><path d="M8.6,3.6 H11.6 M8.6,6 H11.6" stroke="#7db8e8" stroke-width="1.2"/><path d="M0,5.6 H5.4" stroke="#1d5a86" stroke-width="1.3"/><polygon points="4.8,3.2 7.8,5.6 4.8,8" fill="#1d5a86"/><rect x="8.6" y="6" width="10" height="8.9" fill="#f4f9fe" stroke="#17486a" stroke-width="1.7"/><path d="M13,9.4 H16.6 M13,12 H16.6" stroke="#6aaee6" stroke-width="1.3"/></svg>
<div class="t f16" style="left:2126.40px;top:661.54px;height:24.00px;line-height:24.00px;color:#333;">年周数</div>
<div style="left:2039.10px;top:684.60px;width:1.00px;height:24.31px;background-image:repeating-linear-gradient(to bottom,#c2c2c2 0,#c2c2c2 1.3px,transparent 1.3px,transparent 2.7011px)"></div>
<div style="left:2087.90px;top:684.60px;width:1.00px;height:12.15px;background-image:repeating-linear-gradient(to bottom,#c2c2c2 0,#c2c2c2 1.3px,transparent 1.3px,transparent 2.7011px)"></div>
<div style="left:2089.30px;top:696.55px;width:10.10px;height:1.00px;background-image:repeating-linear-gradient(to right,#c2c2c2 0,#c2c2c2 1.3px,transparent 1.3px,transparent 2.667px)"></div>
<svg style="left:2101.70px;top:688.65px" width="21" height="17" viewBox="0 0 21 17"><rect x="3.4" y="0.9" width="10" height="9" fill="#e8f3fc" stroke="#17486a" stroke-width="1.7"/><path d="M8.6,3.6 H11.6 M8.6,6 H11.6" stroke="#7db8e8" stroke-width="1.2"/><path d="M0,5.6 H5.4" stroke="#1d5a86" stroke-width="1.3"/><polygon points="4.8,3.2 7.8,5.6 4.8,8" fill="#1d5a86"/><rect x="8.6" y="6" width="10" height="8.9" fill="#f4f9fe" stroke="#17486a" stroke-width="1.7"/><path d="M13,9.4 H16.6 M13,12 H16.6" stroke="#6aaee6" stroke-width="1.3"/></svg>
<div class="t f16" style="left:2126.40px;top:685.85px;height:24.00px;line-height:24.00px;color:#333;">季度</div>
<div style="left:2039.10px;top:708.90px;width:1.00px;height:6.15px;background-image:repeating-linear-gradient(to bottom,#c2c2c2 0,#c2c2c2 1.3px,transparent 1.3px,transparent 2.7011px)"></div>
<div style="left:2039.10px;top:727.46px;width:1.00px;height:5.75px;background-image:repeating-linear-gradient(to bottom,#c2c2c2 0,#c2c2c2 1.3px,transparent 1.3px,transparent 2.7011px)"></div>
<div style="left:2046.80px;top:720.86px;width:7.00px;height:1.00px;background-image:repeating-linear-gradient(to right,#c2c2c2 0,#c2c2c2 1.3px,transparent 1.3px,transparent 2.667px)"></div>
<svg style="left:2033.00px;top:715.06px" width="13" height="13" viewBox="0 0 13 13"><rect x="0.8" y="0.8" width="11" height="11" rx="1.6" fill="url(#tg)" stroke="#8fa6c2" stroke-width="1.3"/><path d="M3.4,6.3 H9.2" stroke="#111" stroke-width="1.5"/><path d="M6.3,3.4 V9.2" stroke="#111" stroke-width="1.5"/></svg>
<svg style="left:2055.10px;top:713.06px" width="17" height="17" viewBox="0 0 17 17"><rect x="0.8" y="0.8" width="14.6" height="14.6" rx="0.8" fill="#fff" stroke="#222" stroke-width="1.5"/><path d="M7,7.2 H13.6 M7,9.6 H13.6 M7,12 H13.6" stroke="#d4d4d4" stroke-width="1"/><rect x="7.2" y="3" width="6" height="1.8" fill="#222"/><rect x="3" y="7" width="2.2" height="6.2" fill="#222"/></svg>
<div class="t f16" style="left:2077.80px;top:710.16px;height:24.00px;line-height:24.00px;color:#333;">商品</div>
<div style="left:2039.10px;top:733.22px;width:1.00px;height:24.31px;background-image:repeating-linear-gradient(to bottom,#c2c2c2 0,#c2c2c2 1.3px,transparent 1.3px,transparent 2.7011px)"></div>
<div style="left:2040.50px;top:745.17px;width:13.30px;height:1.00px;background-image:repeating-linear-gradient(to right,#c2c2c2 0,#c2c2c2 1.3px,transparent 1.3px,transparent 2.667px)"></div>
<svg style="left:2055.10px;top:737.37px" width="17" height="17" viewBox="0 0 17 17"><rect x="0.8" y="0.8" width="14.6" height="14.6" rx="0.8" fill="#fff" stroke="#222" stroke-width="1.5"/><rect x="3.2" y="4" width="2.6" height="9" fill="#e6e6e6"/><path d="M7.2,4.8 H13.4" stroke="#ccc" stroke-width="1"/><path d="M7.2,7.4 H13.4 M7.2,10 H13.4 M7.2,12.6 H13.4" stroke="#333" stroke-width="1.4"/></svg>
<div class="t f16" style="left:2077.80px;top:734.47px;height:24.00px;line-height:24.00px;color:#333;font-weight:700;">数量</div>
<div style="left:2039.10px;top:757.52px;width:1.00px;height:24.31px;background-image:repeating-linear-gradient(to bottom,#c2c2c2 0,#c2c2c2 1.3px,transparent 1.3px,transparent 2.7011px)"></div>
<div style="left:2040.50px;top:769.48px;width:13.30px;height:1.00px;background-image:repeating-linear-gradient(to right,#c2c2c2 0,#c2c2c2 1.3px,transparent 1.3px,transparent 2.667px)"></div>
<svg style="left:2055.10px;top:761.68px" width="17" height="17" viewBox="0 0 17 17"><rect x="0.8" y="0.8" width="14.6" height="14.6" rx="0.8" fill="#fff" stroke="#222" stroke-width="1.5"/><rect x="3.2" y="4" width="2.6" height="9" fill="#e6e6e6"/><path d="M7.2,4.8 H13.4" stroke="#ccc" stroke-width="1"/><path d="M7.2,7.4 H13.4 M7.2,10 H13.4 M7.2,12.6 H13.4" stroke="#333" stroke-width="1.4"/></svg>
<div class="t f16" style="left:2077.80px;top:758.78px;height:24.00px;line-height:24.00px;color:#333;">折扣</div>
<div style="left:2039.10px;top:781.84px;width:1.00px;height:12.15px;background-image:repeating-linear-gradient(to bottom,#c2c2c2 0,#c2c2c2 1.3px,transparent 1.3px,transparent 2.7011px)"></div>
<div style="left:2040.50px;top:793.79px;width:13.30px;height:1.00px;background-image:repeating-linear-gradient(to right,#c2c2c2 0,#c2c2c2 1.3px,transparent 1.3px,transparent 2.667px)"></div>
<svg style="left:2055.10px;top:785.99px" width="17" height="17" viewBox="0 0 17 17"><rect x="0.8" y="0.8" width="14.6" height="14.6" rx="0.8" fill="#fff" stroke="#222" stroke-width="1.5"/><rect x="3.2" y="4" width="2.6" height="9" fill="#e6e6e6"/><path d="M7.2,4.8 H13.4" stroke="#ccc" stroke-width="1"/><path d="M7.2,7.4 H13.4 M7.2,10 H13.4 M7.2,12.6 H13.4" stroke="#333" stroke-width="1.4"/></svg>
<div class="t f16" style="left:2077.80px;top:783.09px;height:24.00px;line-height:24.00px;color:#333;">明细金额</div>
</body></html>
